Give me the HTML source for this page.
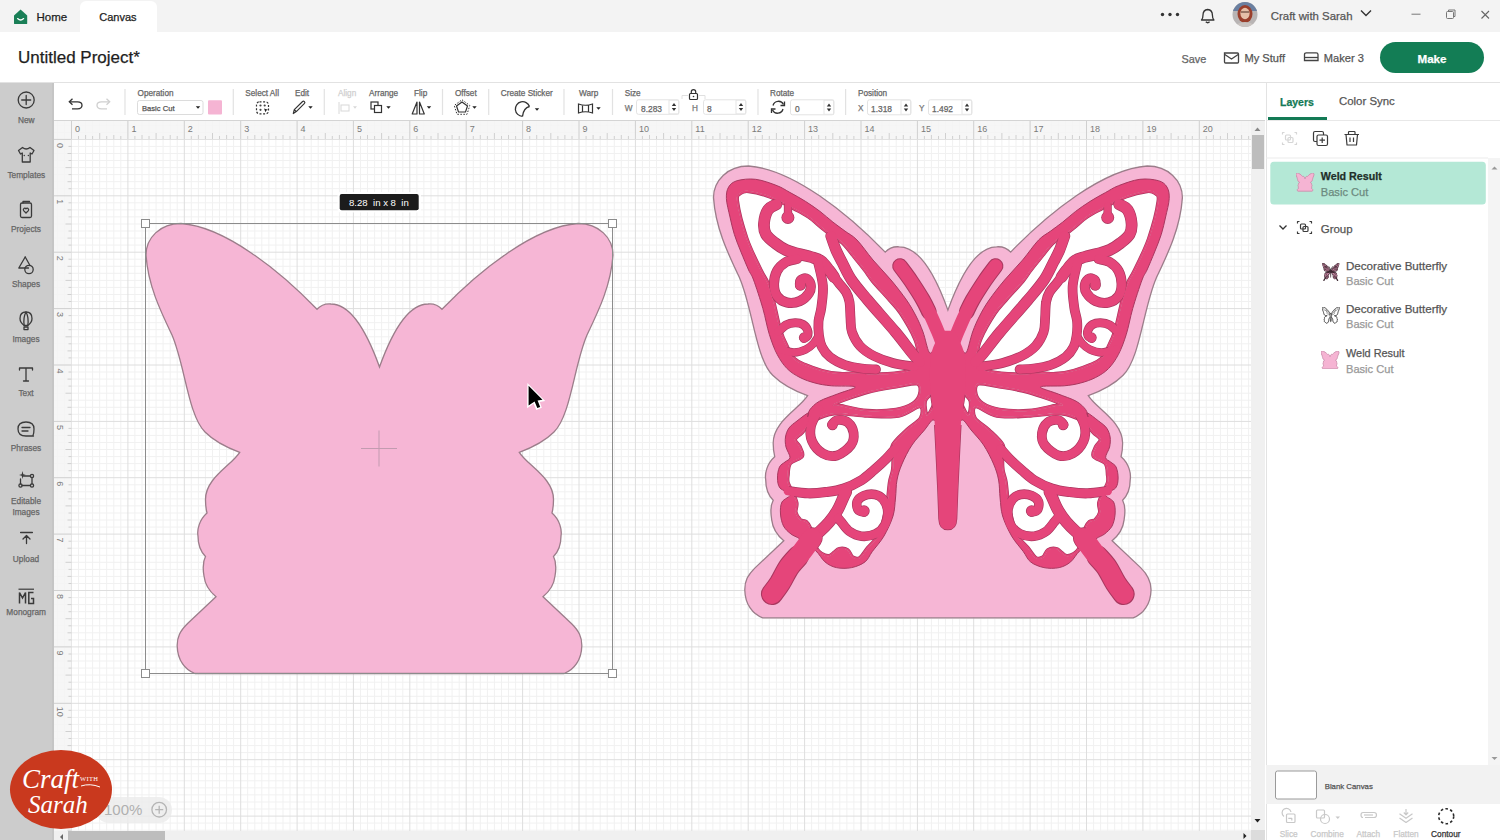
<!DOCTYPE html>
<html><head><meta charset="utf-8">
<style>
*{box-sizing:border-box;margin:0;padding:0}
html,body{width:1500px;height:840px;overflow:hidden;background:#fff;font-family:"Liberation Sans",sans-serif;color:#333}
.abs{position:absolute}
.t{position:absolute;white-space:nowrap;line-height:1;-webkit-text-stroke:0.25px currentColor}
</style></head><body>
<svg class="abs" style="left:0;top:0" width="1500" height="840"><rect x="53.5" y="121" width="1197.5" height="710" fill="#fff"/><path d="M57.4 120V831M64.5 120V831M78.5 120V831M85.6 120V831M92.6 120V831M99.7 120V831M106.7 120V831M113.8 120V831M120.8 120V831M134.9 120V831M142 120V831M149 120V831M156.1 120V831M163.1 120V831M170.2 120V831M177.2 120V831M191.3 120V831M198.4 120V831M205.4 120V831M212.5 120V831M219.5 120V831M226.6 120V831M233.6 120V831M247.7 120V831M254.8 120V831M261.8 120V831M268.9 120V831M275.9 120V831M283 120V831M290 120V831M304.1 120V831M311.2 120V831M318.2 120V831M325.3 120V831M332.3 120V831M339.4 120V831M346.4 120V831M360.5 120V831M367.5 120V831M374.6 120V831M381.6 120V831M388.7 120V831M395.7 120V831M402.8 120V831M416.9 120V831M423.9 120V831M431 120V831M438 120V831M445.1 120V831M452.1 120V831M459.2 120V831M473.3 120V831M480.3 120V831M487.4 120V831M494.4 120V831M501.5 120V831M508.5 120V831M515.6 120V831M529.7 120V831M536.7 120V831M543.8 120V831M550.8 120V831M557.9 120V831M564.9 120V831M572 120V831M586.1 120V831M593.1 120V831M600.2 120V831M607.2 120V831M614.3 120V831M621.3 120V831M628.4 120V831M642.4 120V831M649.5 120V831M656.5 120V831M663.6 120V831M670.6 120V831M677.7 120V831M684.7 120V831M698.8 120V831M705.9 120V831M712.9 120V831M720 120V831M727 120V831M734.1 120V831M741.1 120V831M755.2 120V831M762.3 120V831M769.3 120V831M776.4 120V831M783.4 120V831M790.5 120V831M797.5 120V831M811.6 120V831M818.7 120V831M825.7 120V831M832.8 120V831M839.8 120V831M846.9 120V831M853.9 120V831M868 120V831M875.1 120V831M882.1 120V831M889.2 120V831M896.2 120V831M903.3 120V831M910.3 120V831M924.4 120V831M931.4 120V831M938.5 120V831M945.5 120V831M952.6 120V831M959.6 120V831M966.7 120V831M980.8 120V831M987.8 120V831M994.9 120V831M1001.9 120V831M1009 120V831M1016 120V831M1023.1 120V831M1037.2 120V831M1044.2 120V831M1051.3 120V831M1058.3 120V831M1065.4 120V831M1072.4 120V831M1079.5 120V831M1093.6 120V831M1100.6 120V831M1107.7 120V831M1114.7 120V831M1121.8 120V831M1128.8 120V831M1135.9 120V831M1150 120V831M1157 120V831M1164.1 120V831M1171.1 120V831M1178.2 120V831M1185.2 120V831M1192.3 120V831M1206.3 120V831M1213.4 120V831M1220.4 120V831M1227.5 120V831M1234.5 120V831M1241.6 120V831M1248.6 120V831M53 125.3H1251M53 132.4H1251M53 146.4H1251M53 153.5H1251M53 160.5H1251M53 167.6H1251M53 174.6H1251M53 181.7H1251M53 188.7H1251M53 202.8H1251M53 209.9H1251M53 216.9H1251M53 224H1251M53 231H1251M53 238.1H1251M53 245.1H1251M53 259.2H1251M53 266.3H1251M53 273.3H1251M53 280.4H1251M53 287.4H1251M53 294.5H1251M53 301.5H1251M53 315.6H1251M53 322.7H1251M53 329.7H1251M53 336.8H1251M53 343.8H1251M53 350.9H1251M53 357.9H1251M53 372H1251M53 379.1H1251M53 386.1H1251M53 393.2H1251M53 400.2H1251M53 407.3H1251M53 414.3H1251M53 428.4H1251M53 435.4H1251M53 442.5H1251M53 449.5H1251M53 456.6H1251M53 463.6H1251M53 470.7H1251M53 484.8H1251M53 491.8H1251M53 498.9H1251M53 505.9H1251M53 513H1251M53 520H1251M53 527.1H1251M53 541.2H1251M53 548.2H1251M53 555.3H1251M53 562.3H1251M53 569.4H1251M53 576.4H1251M53 583.5H1251M53 597.6H1251M53 604.6H1251M53 611.7H1251M53 618.7H1251M53 625.8H1251M53 632.8H1251M53 639.9H1251M53 654H1251M53 661H1251M53 668.1H1251M53 675.1H1251M53 682.2H1251M53 689.2H1251M53 696.3H1251M53 710.3H1251M53 717.4H1251M53 724.4H1251M53 731.5H1251M53 738.5H1251M53 745.6H1251M53 752.6H1251M53 766.7H1251M53 773.8H1251M53 780.8H1251M53 787.9H1251M53 794.9H1251M53 802H1251M53 809H1251M53 823.1H1251M53 830.2H1251" stroke="#f1f1f1" stroke-width="1" fill="none"/>
<path d="M71.5 120V831M127.9 120V831M184.3 120V831M240.7 120V831M297.1 120V831M353.4 120V831M409.8 120V831M466.2 120V831M522.6 120V831M579 120V831M635.4 120V831M691.8 120V831M748.2 120V831M804.6 120V831M861 120V831M917.4 120V831M973.7 120V831M1030.1 120V831M1086.5 120V831M1142.9 120V831M1199.3 120V831M53 139.4H1251M53 195.8H1251M53 252.2H1251M53 308.6H1251M53 365H1251M53 421.4H1251M53 477.7H1251M53 534.1H1251M53 590.5H1251M53 646.9H1251M53 703.3H1251M53 759.7H1251M53 816.1H1251" stroke="#dedede" stroke-width="1" fill="none"/><rect x="53" y="120.5" width="1198" height="18.5" fill="#f5f5f5" fill-opacity="0.85"/>
<rect x="53" y="139" width="18.5" height="692" fill="#f5f5f5" fill-opacity="0.85"/>
<path d="M71.5 121V139M78.5 136V139M85.6 135V139M92.6 136V139M99.7 133V139M106.7 136V139M113.8 135V139M120.8 136V139M127.9 121V139M134.9 136V139M142 135V139M149 136V139M156.1 133V139M163.1 136V139M170.2 135V139M177.2 136V139M184.3 121V139M191.3 136V139M198.4 135V139M205.4 136V139M212.5 133V139M219.5 136V139M226.6 135V139M233.6 136V139M240.7 121V139M247.7 136V139M254.8 135V139M261.8 136V139M268.9 133V139M275.9 136V139M283 135V139M290 136V139M297.1 121V139M304.1 136V139M311.2 135V139M318.2 136V139M325.3 133V139M332.3 136V139M339.4 135V139M346.4 136V139M353.4 121V139M360.5 136V139M367.5 135V139M374.6 136V139M381.6 133V139M388.7 136V139M395.7 135V139M402.8 136V139M409.8 121V139M416.9 136V139M423.9 135V139M431 136V139M438 133V139M445.1 136V139M452.1 135V139M459.2 136V139M466.2 121V139M473.3 136V139M480.3 135V139M487.4 136V139M494.4 133V139M501.5 136V139M508.5 135V139M515.6 136V139M522.6 121V139M529.7 136V139M536.7 135V139M543.8 136V139M550.8 133V139M557.9 136V139M564.9 135V139M572 136V139M579 121V139M586.1 136V139M593.1 135V139M600.2 136V139M607.2 133V139M614.3 136V139M621.3 135V139M628.4 136V139M635.4 121V139M642.4 136V139M649.5 135V139M656.5 136V139M663.6 133V139M670.6 136V139M677.7 135V139M684.7 136V139M691.8 121V139M698.8 136V139M705.9 135V139M712.9 136V139M720 133V139M727 136V139M734.1 135V139M741.1 136V139M748.2 121V139M755.2 136V139M762.3 135V139M769.3 136V139M776.4 133V139M783.4 136V139M790.5 135V139M797.5 136V139M804.6 121V139M811.6 136V139M818.7 135V139M825.7 136V139M832.8 133V139M839.8 136V139M846.9 135V139M853.9 136V139M861 121V139M868 136V139M875.1 135V139M882.1 136V139M889.2 133V139M896.2 136V139M903.3 135V139M910.3 136V139M917.4 121V139M924.4 136V139M931.4 135V139M938.5 136V139M945.5 133V139M952.6 136V139M959.6 135V139M966.7 136V139M973.7 121V139M980.8 136V139M987.8 135V139M994.9 136V139M1001.9 133V139M1009 136V139M1016 135V139M1023.1 136V139M1030.1 121V139M1037.2 136V139M1044.2 135V139M1051.3 136V139M1058.3 133V139M1065.4 136V139M1072.4 135V139M1079.5 136V139M1086.5 121V139M1093.6 136V139M1100.6 135V139M1107.7 136V139M1114.7 133V139M1121.8 136V139M1128.8 135V139M1135.9 136V139M1142.9 121V139M1150 136V139M1157 135V139M1164.1 136V139M1171.1 133V139M1178.2 136V139M1185.2 135V139M1192.3 136V139M1199.3 121V139M1206.3 136V139M1213.4 135V139M1220.4 136V139M1227.5 133V139M1234.5 136V139M1241.6 135V139M1248.6 136V139M53 139.4H71.5M68.5 146.4H71.5M67.5 153.5H71.5M68.5 160.5H71.5M65.5 167.6H71.5M68.5 174.6H71.5M67.5 181.7H71.5M68.5 188.7H71.5M53 195.8H71.5M68.5 202.8H71.5M67.5 209.9H71.5M68.5 216.9H71.5M65.5 224H71.5M68.5 231H71.5M67.5 238.1H71.5M68.5 245.1H71.5M53 252.2H71.5M68.5 259.2H71.5M67.5 266.3H71.5M68.5 273.3H71.5M65.5 280.4H71.5M68.5 287.4H71.5M67.5 294.5H71.5M68.5 301.5H71.5M53 308.6H71.5M68.5 315.6H71.5M67.5 322.7H71.5M68.5 329.7H71.5M65.5 336.8H71.5M68.5 343.8H71.5M67.5 350.9H71.5M68.5 357.9H71.5M53 365H71.5M68.5 372H71.5M67.5 379.1H71.5M68.5 386.1H71.5M65.5 393.2H71.5M68.5 400.2H71.5M67.5 407.3H71.5M68.5 414.3H71.5M53 421.4H71.5M68.5 428.4H71.5M67.5 435.4H71.5M68.5 442.5H71.5M65.5 449.5H71.5M68.5 456.6H71.5M67.5 463.6H71.5M68.5 470.7H71.5M53 477.7H71.5M68.5 484.8H71.5M67.5 491.8H71.5M68.5 498.9H71.5M65.5 505.9H71.5M68.5 513H71.5M67.5 520H71.5M68.5 527.1H71.5M53 534.1H71.5M68.5 541.2H71.5M67.5 548.2H71.5M68.5 555.3H71.5M65.5 562.3H71.5M68.5 569.4H71.5M67.5 576.4H71.5M68.5 583.5H71.5M53 590.5H71.5M68.5 597.6H71.5M67.5 604.6H71.5M68.5 611.7H71.5M65.5 618.7H71.5M68.5 625.8H71.5M67.5 632.8H71.5M68.5 639.9H71.5M53 646.9H71.5M68.5 654H71.5M67.5 661H71.5M68.5 668.1H71.5M65.5 675.1H71.5M68.5 682.2H71.5M67.5 689.2H71.5M68.5 696.3H71.5M53 703.3H71.5M68.5 710.3H71.5M67.5 717.4H71.5M68.5 724.4H71.5M65.5 731.5H71.5M68.5 738.5H71.5M67.5 745.6H71.5M68.5 752.6H71.5M53 759.7H71.5M68.5 766.7H71.5M67.5 773.8H71.5M68.5 780.8H71.5M65.5 787.9H71.5M68.5 794.9H71.5M67.5 802H71.5M68.5 809H71.5M53 816.1H71.5M68.5 823.1H71.5M67.5 830.2H71.5" stroke="#d0d0d0" stroke-width="1" fill="none"/>
<path d="M53 120.5H1251" stroke="#d6d6d6" stroke-width="1"/>
<g font-family="Liberation Sans, sans-serif" font-size="9" fill="#7a7a7a"><text x="75" y="131.5">0</text><text x="131.4" y="131.5">1</text><text x="187.8" y="131.5">2</text><text x="244.2" y="131.5">3</text><text x="300.6" y="131.5">4</text><text x="356.9" y="131.5">5</text><text x="413.3" y="131.5">6</text><text x="469.7" y="131.5">7</text><text x="526.1" y="131.5">8</text><text x="582.5" y="131.5">9</text><text x="638.9" y="131.5">10</text><text x="695.3" y="131.5">11</text><text x="751.7" y="131.5">12</text><text x="808.1" y="131.5">13</text><text x="864.5" y="131.5">14</text><text x="920.9" y="131.5">15</text><text x="977.2" y="131.5">16</text><text x="1033.6" y="131.5">17</text><text x="1090" y="131.5">18</text><text x="1146.4" y="131.5">19</text><text x="1202.8" y="131.5">20</text></g>
<g font-family="Liberation Sans, sans-serif" font-size="9" fill="#7a7a7a"><text transform="translate(57 142.9) rotate(90)">0</text><text transform="translate(57 199.3) rotate(90)">1</text><text transform="translate(57 255.7) rotate(90)">2</text><text transform="translate(57 312.1) rotate(90)">3</text><text transform="translate(57 368.5) rotate(90)">4</text><text transform="translate(57 424.9) rotate(90)">5</text><text transform="translate(57 481.2) rotate(90)">6</text><text transform="translate(57 537.6) rotate(90)">7</text><text transform="translate(57 594) rotate(90)">8</text><text transform="translate(57 650.4) rotate(90)">9</text><text transform="translate(57 706.8) rotate(90)">10</text><text transform="translate(57 763.2) rotate(90)">11</text></g><path d="M 379.5 367 C 368 335 352 304 331 304 C 325 303.5 320 306 317 309.3 C 280 271 225 226.5 181 223.5 C 160 223.5 146 238 146 255 C 148 285 160 310 172 335 C 185 365 188 415 205 432 C 215 442 228 448 239.7 452.3 C 232 465 205 478 205.5 500 C 205.5 505 206 509 207 513 C 199 520 197 530 198 536 C 198 545 200 551 205.5 556.5 C 202 563 203 570 204 576 C 205 585 209 591 216 596.7 L 187.6 623.5 C 180 631 177 637 177.2 646 C 177.5 660 185 670 195 673.5 L 379.5 673.5 L 564 673.5 C 574 670 581.5 660 581.8 646 C 582 637 579 631 571.4 623.5 L 543 596.7 C 550 591 554 585 555 576 C 556 570 557 563 553.5 556.5 C 559 551 561 545 561 536 C 562 530 560 520 552 513 C 553 509 553.5 505 553.5 500 C 554 478 527 465 519.3 452.3 C 531 448 544 442 554 432 C 571 415 574 365 587 335 C 599 310 611 285 613 255 C 613 238 599 223.5 578 223.5 C 534 226.5 479 271 442 309.3 C 439 306 434 303.5 428 304 C 407 304 391 335 379.5 367 Z" fill="#f6b6d5" stroke="#9b7d8a" stroke-width="1.3"/><path d="M379 430.5V466.5M361 448.5H397" stroke="#c29bb0" stroke-width="1"/><rect x="145.5" y="223.5" width="467" height="450" fill="none" stroke="#8c8c8c" stroke-width="1"/><rect x="141.5" y="219.5" width="8" height="8" fill="#fff" stroke="#8c8c8c" stroke-width="1"/><rect x="608.5" y="219.5" width="8" height="8" fill="#fff" stroke="#8c8c8c" stroke-width="1"/><rect x="141.5" y="669.5" width="8" height="8" fill="#fff" stroke="#8c8c8c" stroke-width="1"/><rect x="608.5" y="669.5" width="8" height="8" fill="#fff" stroke="#8c8c8c" stroke-width="1"/><rect x="337.5" y="192" width="83.5" height="20.5" rx="3" fill="#fff" fill-opacity="0.9"/><rect x="339.7" y="194" width="79" height="16.3" rx="2" fill="#1c1c1c"/><text x="349" y="206.3" font-family="Liberation Sans, sans-serif" font-size="9.6" fill="#fff" xml:space="preserve">8.28  in x 8  in</text><path d="M 947.9 310.1 C 936.4 277.9 920.3 246.8 899.2 246.8 C 893.2 246.3 888.2 248.8 885.2 252.1 C 848 213.7 792.8 169 748.6 166 C 727.6 166 713.5 180.6 713.5 197.6 C 715.5 227.7 727.6 252.8 739.6 277.9 C 752.7 308.1 755.7 358.3 772.7 375.3 C 782.8 385.4 795.8 391.4 807.6 395.7 C 799.8 408.5 772.7 421.5 773.2 443.6 C 773.2 448.6 773.7 452.6 774.7 456.7 C 766.7 463.7 764.7 473.7 765.7 479.8 C 765.7 488.8 767.7 494.8 773.2 500.3 C 769.7 506.9 770.7 513.9 771.7 519.9 C 772.7 528.9 776.8 535 783.8 540.7 L 755.3 567.6 C 747.6 575.1 744.6 581.2 744.8 590.2 C 745.1 604.2 752.7 614.3 762.7 617.8 L 947.9 617.8 L 1133.2 617.8 C 1143.2 614.3 1150.7 604.2 1151 590.2 C 1151.2 581.2 1148.2 575.1 1140.6 567.6 L 1112.1 540.7 C 1119.1 535 1123.1 528.9 1124.1 519.9 C 1125.1 513.9 1126.1 506.9 1122.6 500.3 C 1128.2 494.8 1130.2 488.8 1130.2 479.8 C 1131.2 473.7 1129.2 463.7 1121.1 456.7 C 1122.1 452.6 1122.6 448.6 1122.6 443.6 C 1123.1 421.5 1096 408.5 1088.3 395.7 C 1100 391.4 1113.1 385.4 1123.1 375.3 C 1140.2 358.3 1143.2 308.1 1156.3 277.9 C 1168.3 252.8 1180.4 227.7 1182.4 197.6 C 1182.4 180.6 1168.3 166 1147.2 166 C 1103.1 169 1047.8 213.7 1010.7 252.1 C 1007.7 248.8 1002.7 246.3 996.6 246.8 C 975.5 246.8 959.5 277.9 947.9 310.1 Z" fill="#f6b6d5" stroke="#9b7d8a" stroke-width="1.3"/><path d="M 941 345 C 938.7 336.7 936 348.8 934 350 C 932 351.2 930.8 355 929 352 C 927.2 349 925.2 338 923 332 C 920.8 326 918.8 321.3 916 316 C 913.2 310.7 910.7 306 906.5 300 C 902.3 294 896.6 286.7 891 280 C 885.4 273.3 878.7 266.7 873 260 C 867.3 253.3 861.7 244.8 857 240 C 852.3 235.2 849 234.1 845 231.1 C 841 228.1 837.1 225.4 832.9 222.1 C 828.7 218.8 824.5 214.8 820 211.4 C 815.5 208 810.7 204.7 805.7 201.5 C 800.7 198.3 794.8 195.1 790 192.5 C 785.2 189.9 782.8 187.9 777.1 185.7 C 771.4 183.5 762.4 180.1 755.7 179.3 C 749 178.5 741.6 179.4 737.1 180.7 C 732.6 182 730.4 184.1 728.6 187.1 C 726.8 190.1 726.2 193.6 726.4 198.6 C 726.6 203.6 728.7 211.1 730 217 C 731.3 222.9 732.5 228.5 734.3 234.3 C 736.1 240.1 738.6 246.1 741 252 C 743.4 257.9 746.5 265.3 748.6 270 C 750.7 274.7 751.2 273.6 753.6 280 C 756 286.4 760.3 299.6 762.9 308.6 C 765.5 317.7 766.9 326.7 769.3 334.3 C 771.7 341.9 774.1 348.6 777.1 354.3 C 780.1 360 783.3 364.7 787.1 368.6 C 790.9 372.5 795.4 375.1 800 377.5 C 804.6 379.9 809.8 381.6 815 383 C 820.2 384.4 824.7 385.2 831.4 385.8 C 838.1 386.4 854.2 385.5 855.2 386.9 C 856.2 388.3 843.4 391.6 837.4 394 C 831.4 396.4 824.1 398.6 819.5 401.2 C 814.9 403.8 812 406.9 810 409.5 C 808 412.1 807.9 416.1 807.6 416.7 C 807.3 417.3 809.8 412.3 808 413 C 806.2 413.7 800.2 418.5 797 421 C 793.8 423.5 790.9 425.3 789 428 C 787.1 430.7 786 433.8 785.5 437 C 785 440.2 785.2 443.6 786 447 C 786.8 450.4 790.2 455 790 457.5 C 789.8 460 786.8 460.4 785 462 C 783.2 463.6 780.8 464.3 779.5 467 C 778.2 469.7 777.4 474.5 777.5 478 C 777.6 481.5 777.8 485.2 780 488 C 782.2 490.8 790.2 492.2 790.5 494.5 C 790.8 496.8 783.7 498.8 782 502 C 780.3 505.2 780.2 510 780.5 514 C 780.8 518 781.8 522.7 783.5 526 C 785.2 529.3 788.2 531.8 791 534 C 793.8 536.2 795.9 536.2 800 539 C 804.1 541.8 811.3 546.7 815.5 550.5 C 819.7 554.3 821.5 559 825 561.9 C 828.5 564.8 831.9 566.6 836.4 567.6 C 840.9 568.6 846.9 568.6 851.7 567.6 C 856.5 566.6 861.5 564.6 865 561.9 C 868.5 559.2 869.2 555.7 872.4 551.4 C 875.6 547.1 880.6 541.9 884 536 C 887.4 530.1 891.1 522.3 893 516 C 894.9 509.7 894.8 504 895.5 498 C 896.2 492 895.9 485.7 897 480 C 898.1 474.3 899.5 469.8 902 464 C 904.5 458.2 908.2 450.7 912 445 C 915.8 439.3 921.2 434.1 924.5 430 C 927.8 425.9 929.8 422.3 931.9 420.5 C 934 418.7 934.3 422.4 937 419 C 939.7 415.6 947.2 412.3 947.9 400 C 948.6 387.7 943.3 353.3 941 345 Z" fill="#e5457a" stroke="#a9375f" stroke-width="1"/><path d="M 954.6 345 C 956.9 336.7 959.6 348.8 961.6 350 C 963.6 351.2 964.8 355 966.6 352 C 968.4 349 970.4 338 972.6 332 C 974.8 326 976.8 321.3 979.6 316 C 982.3 310.7 984.9 306 989.1 300 C 993.3 294 999 286.7 1004.6 280 C 1010.2 273.3 1016.9 266.7 1022.6 260 C 1028.3 253.3 1033.9 244.8 1038.6 240 C 1043.3 235.2 1046.6 234.1 1050.6 231.1 C 1054.6 228.1 1058.5 225.4 1062.7 222.1 C 1066.9 218.8 1071.1 214.8 1075.6 211.4 C 1080.1 208 1084.9 204.7 1089.9 201.5 C 1094.9 198.3 1100.8 195.1 1105.6 192.5 C 1110.4 189.9 1112.8 187.9 1118.5 185.7 C 1124.2 183.5 1133.2 180.1 1139.9 179.3 C 1146.6 178.5 1154 179.4 1158.5 180.7 C 1163 182 1165.2 184.1 1167 187.1 C 1168.8 190.1 1169.4 193.6 1169.2 198.6 C 1169 203.6 1166.9 211.1 1165.6 217 C 1164.3 222.9 1163.1 228.5 1161.3 234.3 C 1159.5 240.1 1157 246.1 1154.6 252 C 1152.2 257.9 1149.1 265.3 1147 270 C 1144.9 274.7 1144.4 273.6 1142 280 C 1139.6 286.4 1135.3 299.6 1132.7 308.6 C 1130.1 317.7 1128.7 326.7 1126.3 334.3 C 1123.9 341.9 1121.5 348.6 1118.5 354.3 C 1115.5 360 1112.3 364.7 1108.5 368.6 C 1104.7 372.5 1100.2 375.1 1095.6 377.5 C 1090.9 379.9 1085.8 381.6 1080.6 383 C 1075.4 384.4 1070.9 385.2 1064.2 385.8 C 1057.5 386.4 1041.4 385.5 1040.4 386.9 C 1039.4 388.3 1052.2 391.6 1058.2 394 C 1064.1 396.4 1071.5 398.6 1076.1 401.2 C 1080.7 403.8 1083.6 406.9 1085.6 409.5 C 1087.6 412.1 1087.7 416.1 1088 416.7 C 1088.3 417.3 1085.8 412.3 1087.6 413 C 1089.4 413.7 1095.4 418.5 1098.6 421 C 1101.8 423.5 1104.7 425.3 1106.6 428 C 1108.5 430.7 1109.6 433.8 1110.1 437 C 1110.6 440.2 1110.3 443.6 1109.6 447 C 1108.8 450.4 1105.4 455 1105.6 457.5 C 1105.8 460 1108.8 460.4 1110.6 462 C 1112.3 463.6 1114.8 464.3 1116.1 467 C 1117.3 469.7 1118.2 474.5 1118.1 478 C 1118 481.5 1117.8 485.2 1115.6 488 C 1113.4 490.8 1105.4 492.2 1105.1 494.5 C 1104.8 496.8 1111.9 498.8 1113.6 502 C 1115.3 505.2 1115.3 510 1115.1 514 C 1114.8 518 1113.8 522.7 1112.1 526 C 1110.3 529.3 1107.3 531.8 1104.6 534 C 1101.8 536.2 1099.7 536.2 1095.6 539 C 1091.5 541.8 1084.3 546.7 1080.1 550.5 C 1075.9 554.3 1074.1 559 1070.6 561.9 C 1067.1 564.8 1063.6 566.6 1059.2 567.6 C 1054.7 568.6 1048.7 568.6 1043.9 567.6 C 1039.1 566.6 1034 564.6 1030.6 561.9 C 1027.1 559.2 1026.4 555.7 1023.2 551.4 C 1020 547.1 1015 541.9 1011.6 536 C 1008.2 530.1 1004.5 522.3 1002.6 516 C 1000.7 509.7 1000.8 504 1000.1 498 C 999.4 492 999.7 485.7 998.6 480 C 997.5 474.3 996.1 469.8 993.6 464 C 991.1 458.2 987.3 450.7 983.6 445 C 979.8 439.3 974.4 434.1 971.1 430 C 967.8 425.9 965.8 422.3 963.7 420.5 C 961.6 418.7 961.3 422.4 958.6 419 C 955.9 415.6 948.4 412.3 947.7 400 C 947 387.7 952.3 353.3 954.6 345 Z" fill="#e5457a" stroke="#a9375f" stroke-width="1"/><path d="M 737 201.4 C 736 193.8 738.6 194.7 740.5 193 C 742.4 191.3 743.7 190.4 748.6 191 C 753.5 191.6 762.4 193.6 770 196.5 C 777.6 199.4 787.9 205.2 794.3 208.5 C 800.7 211.8 804 213.3 808.6 216.5 C 813.2 219.7 818.3 224.5 822 227.5 C 825.7 230.5 827.5 231.9 831 234.5 C 834.5 237.1 838.7 238.8 843 243 C 847.3 247.2 853.3 255.5 857 260 C 860.7 264.5 862.3 266.5 865 270 C 867.7 273.5 868.8 276 873 281 C 877.2 286 885.3 294.6 890 300 C 894.7 305.4 896.8 306.9 901 313.3 C 905.2 319.7 912 331.4 915 338.3 C 918 345.2 918.5 350.4 919 355 C 919.5 359.6 920.3 363.2 918 366 C 915.7 368.8 911.3 370.6 905 372 C 898.7 373.4 888.3 374.2 880 374.5 C 871.7 374.8 861.7 373.6 855 373.5 C 848.3 373.4 845.5 374.4 840 374 C 834.5 373.6 827.8 372.5 822 371 C 816.2 369.5 809.6 367 805 365 C 800.4 363 797.3 362 794.3 359 C 791.3 356 789.5 351.9 787.1 347.1 C 784.7 342.3 782.4 337.9 780 330 C 777.6 322.1 775 307.9 772.9 300 C 770.8 292.1 769.6 287.9 767.5 282.9 C 765.4 277.9 764 277.4 760.5 270 C 757 262.6 750.4 250 746.5 238.6 C 742.6 227.2 738 209 737 201.4 Z" fill="#fff"/><path d="M 1158.6 201.4 C 1159.6 193.8 1157 194.7 1155.1 193 C 1153.2 191.3 1151.9 190.4 1147 191 C 1142.1 191.6 1133.2 193.6 1125.6 196.5 C 1118 199.4 1107.7 205.2 1101.3 208.5 C 1094.9 211.8 1091.6 213.3 1087 216.5 C 1082.4 219.7 1077.3 224.5 1073.6 227.5 C 1069.9 230.5 1068.1 231.9 1064.6 234.5 C 1061.1 237.1 1056.9 238.8 1052.6 243 C 1048.3 247.2 1042.3 255.5 1038.6 260 C 1034.9 264.5 1033.3 266.5 1030.6 270 C 1027.9 273.5 1026.8 276 1022.6 281 C 1018.4 286 1010.3 294.6 1005.6 300 C 1000.9 305.4 998.8 306.9 994.6 313.3 C 990.4 319.7 983.6 331.4 980.6 338.3 C 977.6 345.2 977.1 350.4 976.6 355 C 976.1 359.6 975.3 363.2 977.6 366 C 979.9 368.8 984.3 370.6 990.6 372 C 996.9 373.4 1007.3 374.2 1015.6 374.5 C 1023.9 374.8 1033.9 373.6 1040.6 373.5 C 1047.3 373.4 1050.1 374.4 1055.6 374 C 1061.1 373.6 1067.8 372.5 1073.6 371 C 1079.4 369.5 1086 367 1090.6 365 C 1095.2 363 1098.3 362 1101.3 359 C 1104.3 356 1106.1 351.9 1108.5 347.1 C 1110.9 342.3 1113.2 337.9 1115.6 330 C 1118 322.1 1120.6 307.9 1122.7 300 C 1124.8 292.1 1126 287.9 1128.1 282.9 C 1130.2 277.9 1131.6 277.4 1135.1 270 C 1138.6 262.6 1145.2 250 1149.1 238.6 C 1153 227.2 1157.6 209 1158.6 201.4 Z" fill="#fff"/><path d="M 813.8 420.5 C 819.2 417.3 825.3 414.1 834.3 413.3 C 843.3 412.5 856.9 415.3 867.6 415.7 C 878.3 416.1 889.9 417.3 898.6 415.7 C 907.3 414.1 916.3 405.8 920 406.2 C 923.7 406.6 923.2 414 921 418 C 918.8 422 911.7 425.5 907 430 C 902.3 434.5 895.2 440.3 893 445 C 890.8 449.7 893.5 453.8 893.5 458 C 893.5 462.2 893.6 466 893 470 C 892.4 474 890.8 477 890 482 C 889.2 487 888.8 494.5 888 500 C 887.2 505.5 886.5 509.2 885 515 C 883.5 520.8 881.8 529.5 879 535 C 876.2 540.5 871.2 544.2 868 548 C 864.8 551.8 862.6 556.4 860 558 C 857.4 559.6 854.5 558.7 852.4 557.4 C 850.3 556.1 849.8 551.6 847.6 550.2 C 845.4 548.8 841.5 548.6 839.3 549 C 837.1 549.4 836.3 551.4 834.5 552.6 C 832.7 553.8 830.8 556 828.6 556.2 C 826.4 556.4 823.4 555 821.4 553.8 C 819.4 552.6 818.1 551.3 816.7 549 C 815.3 546.7 814.1 543.6 813 540 C 811.9 536.4 811 530.6 809.8 527.6 C 808.6 524.6 807.6 523.2 806 521.9 C 804.4 520.6 802 521.6 800.2 520 C 798.5 518.4 796.1 515.2 795.5 512.4 C 794.9 509.5 797 506.3 796.4 502.9 C 795.8 499.5 793.5 495.4 792 492 C 790.5 488.6 788.3 485.2 787.6 482.4 C 786.9 479.6 787.2 478.4 787.6 475.2 C 788 472 787.6 466.5 790 463.3 C 792.4 460.1 800.3 459 801.9 456.2 C 803.5 453.4 800.7 449.5 799.5 446.7 C 798.3 443.9 794.4 441.9 794.8 439.5 C 795.2 437.1 798.7 435.6 801.9 432.4 C 805.1 429.2 808.4 423.7 813.8 420.5 Z" fill="#fff"/><path d="M 1081.8 420.5 C 1076.4 417.3 1070.3 414.1 1061.3 413.3 C 1052.3 412.5 1038.7 415.3 1028 415.7 C 1017.3 416.1 1005.7 417.3 997 415.7 C 988.3 414.1 979.3 405.8 975.6 406.2 C 971.9 406.6 972.4 414 974.6 418 C 976.8 422 983.9 425.5 988.6 430 C 993.3 434.5 1000.3 440.3 1002.6 445 C 1004.8 449.7 1002.1 453.8 1002.1 458 C 1002.1 462.2 1002 466 1002.6 470 C 1003.2 474 1004.8 477 1005.6 482 C 1006.4 487 1006.8 494.5 1007.6 500 C 1008.4 505.5 1009.1 509.2 1010.6 515 C 1012.1 520.8 1013.8 529.5 1016.6 535 C 1019.4 540.5 1024.4 544.2 1027.6 548 C 1030.8 551.8 1033 556.4 1035.6 558 C 1038.2 559.6 1041.1 558.7 1043.2 557.4 C 1045.3 556.1 1045.8 551.6 1048 550.2 C 1050.2 548.8 1054.1 548.6 1056.3 549 C 1058.5 549.4 1059.3 551.4 1061.1 552.6 C 1062.9 553.8 1064.8 556 1067 556.2 C 1069.2 556.4 1072.2 555 1074.2 553.8 C 1076.2 552.6 1077.5 551.3 1078.9 549 C 1080.3 546.7 1081.4 543.6 1082.6 540 C 1083.8 536.4 1084.6 530.6 1085.8 527.6 C 1087 524.6 1088 523.2 1089.6 521.9 C 1091.2 520.6 1093.6 521.6 1095.4 520 C 1097.1 518.4 1099.5 515.2 1100.1 512.4 C 1100.7 509.5 1098.6 506.3 1099.2 502.9 C 1099.8 499.5 1102.1 495.4 1103.6 492 C 1105.1 488.6 1107.3 485.2 1108 482.4 C 1108.7 479.6 1108.4 478.4 1108 475.2 C 1107.6 472 1108 466.5 1105.6 463.3 C 1103.2 460.1 1095.3 459 1093.7 456.2 C 1092.1 453.4 1094.9 449.5 1096.1 446.7 C 1097.3 443.9 1101.2 441.9 1100.8 439.5 C 1100.4 437.1 1096.9 435.6 1093.7 432.4 C 1090.5 429.2 1087.2 423.7 1081.8 420.5 Z" fill="#fff"/><path d="M 834.3 403.8 C 838.7 401.4 856.9 394.9 867.6 391.9 C 878.3 388.9 890.3 387.4 898.6 386 C 906.9 384.6 914 382.2 917.6 383.6 C 921.2 385 920.8 390.9 920 394.3 C 919.2 397.7 916.9 401.2 912.9 403.8 C 908.9 406.4 903.8 408.6 896.2 409.8 C 888.7 411 876.7 411.6 867.6 411 C 858.5 410.4 847 407.4 841.4 406.2 C 835.8 405 829.9 406.2 834.3 403.8 Z" fill="#fff"/><path d="M 1061.3 403.8 C 1056.9 401.4 1038.7 394.9 1028 391.9 C 1017.3 388.9 1005.3 387.4 997 386 C 988.7 384.6 981.6 382.2 978 383.6 C 974.4 385 974.8 390.9 975.6 394.3 C 976.4 397.7 978.7 401.2 982.7 403.8 C 986.7 406.4 991.8 408.6 999.4 409.8 C 1006.9 411 1018.9 411.6 1028 411 C 1037.1 410.4 1048.6 407.4 1054.2 406.2 C 1059.7 405 1065.7 406.2 1061.3 403.8 Z" fill="#fff"/><path d="M 924.8 401.4 C 925.6 397.8 930.3 393.9 931.9 394.3 C 933.5 394.7 935.1 400.2 934.3 403.8 C 933.5 407.4 928.7 416.1 927.1 415.7 C 925.5 415.3 924 405 924.8 401.4 Z" fill="#fff"/><path d="M 970.8 401.4 C 970 397.8 965.3 393.9 963.7 394.3 C 962.1 394.7 960.5 400.2 961.3 403.8 C 962.1 407.4 966.9 416.1 968.5 415.7 C 970.1 415.3 971.6 405 970.8 401.4 Z" fill="#fff"/><defs><clipPath id="holeclip"><path d="M 737 201.4 C 736 193.8 738.6 194.7 740.5 193 C 742.4 191.3 743.7 190.4 748.6 191 C 753.5 191.6 762.4 193.6 770 196.5 C 777.6 199.4 787.9 205.2 794.3 208.5 C 800.7 211.8 804 213.3 808.6 216.5 C 813.2 219.7 818.3 224.5 822 227.5 C 825.7 230.5 827.5 231.9 831 234.5 C 834.5 237.1 838.7 238.8 843 243 C 847.3 247.2 853.3 255.5 857 260 C 860.7 264.5 862.3 266.5 865 270 C 867.7 273.5 868.8 276 873 281 C 877.2 286 885.3 294.6 890 300 C 894.7 305.4 896.8 306.9 901 313.3 C 905.2 319.7 912 331.4 915 338.3 C 918 345.2 918.5 350.4 919 355 C 919.5 359.6 920.3 363.2 918 366 C 915.7 368.8 911.3 370.6 905 372 C 898.7 373.4 888.3 374.2 880 374.5 C 871.7 374.8 861.7 373.6 855 373.5 C 848.3 373.4 845.5 374.4 840 374 C 834.5 373.6 827.8 372.5 822 371 C 816.2 369.5 809.6 367 805 365 C 800.4 363 797.3 362 794.3 359 C 791.3 356 789.5 351.9 787.1 347.1 C 784.7 342.3 782.4 337.9 780 330 C 777.6 322.1 775 307.9 772.9 300 C 770.8 292.1 769.6 287.9 767.5 282.9 C 765.4 277.9 764 277.4 760.5 270 C 757 262.6 750.4 250 746.5 238.6 C 742.6 227.2 738 209 737 201.4 Z"/><path d="M 1158.6 201.4 C 1159.6 193.8 1157 194.7 1155.1 193 C 1153.2 191.3 1151.9 190.4 1147 191 C 1142.1 191.6 1133.2 193.6 1125.6 196.5 C 1118 199.4 1107.7 205.2 1101.3 208.5 C 1094.9 211.8 1091.6 213.3 1087 216.5 C 1082.4 219.7 1077.3 224.5 1073.6 227.5 C 1069.9 230.5 1068.1 231.9 1064.6 234.5 C 1061.1 237.1 1056.9 238.8 1052.6 243 C 1048.3 247.2 1042.3 255.5 1038.6 260 C 1034.9 264.5 1033.3 266.5 1030.6 270 C 1027.9 273.5 1026.8 276 1022.6 281 C 1018.4 286 1010.3 294.6 1005.6 300 C 1000.9 305.4 998.8 306.9 994.6 313.3 C 990.4 319.7 983.6 331.4 980.6 338.3 C 977.6 345.2 977.1 350.4 976.6 355 C 976.1 359.6 975.3 363.2 977.6 366 C 979.9 368.8 984.3 370.6 990.6 372 C 996.9 373.4 1007.3 374.2 1015.6 374.5 C 1023.9 374.8 1033.9 373.6 1040.6 373.5 C 1047.3 373.4 1050.1 374.4 1055.6 374 C 1061.1 373.6 1067.8 372.5 1073.6 371 C 1079.4 369.5 1086 367 1090.6 365 C 1095.2 363 1098.3 362 1101.3 359 C 1104.3 356 1106.1 351.9 1108.5 347.1 C 1110.9 342.3 1113.2 337.9 1115.6 330 C 1118 322.1 1120.6 307.9 1122.7 300 C 1124.8 292.1 1126 287.9 1128.1 282.9 C 1130.2 277.9 1131.6 277.4 1135.1 270 C 1138.6 262.6 1145.2 250 1149.1 238.6 C 1153 227.2 1157.6 209 1158.6 201.4 Z"/><path d="M 813.8 420.5 C 819.2 417.3 825.3 414.1 834.3 413.3 C 843.3 412.5 856.9 415.3 867.6 415.7 C 878.3 416.1 889.9 417.3 898.6 415.7 C 907.3 414.1 916.3 405.8 920 406.2 C 923.7 406.6 923.2 414 921 418 C 918.8 422 911.7 425.5 907 430 C 902.3 434.5 895.2 440.3 893 445 C 890.8 449.7 893.5 453.8 893.5 458 C 893.5 462.2 893.6 466 893 470 C 892.4 474 890.8 477 890 482 C 889.2 487 888.8 494.5 888 500 C 887.2 505.5 886.5 509.2 885 515 C 883.5 520.8 881.8 529.5 879 535 C 876.2 540.5 871.2 544.2 868 548 C 864.8 551.8 862.6 556.4 860 558 C 857.4 559.6 854.5 558.7 852.4 557.4 C 850.3 556.1 849.8 551.6 847.6 550.2 C 845.4 548.8 841.5 548.6 839.3 549 C 837.1 549.4 836.3 551.4 834.5 552.6 C 832.7 553.8 830.8 556 828.6 556.2 C 826.4 556.4 823.4 555 821.4 553.8 C 819.4 552.6 818.1 551.3 816.7 549 C 815.3 546.7 814.1 543.6 813 540 C 811.9 536.4 811 530.6 809.8 527.6 C 808.6 524.6 807.6 523.2 806 521.9 C 804.4 520.6 802 521.6 800.2 520 C 798.5 518.4 796.1 515.2 795.5 512.4 C 794.9 509.5 797 506.3 796.4 502.9 C 795.8 499.5 793.5 495.4 792 492 C 790.5 488.6 788.3 485.2 787.6 482.4 C 786.9 479.6 787.2 478.4 787.6 475.2 C 788 472 787.6 466.5 790 463.3 C 792.4 460.1 800.3 459 801.9 456.2 C 803.5 453.4 800.7 449.5 799.5 446.7 C 798.3 443.9 794.4 441.9 794.8 439.5 C 795.2 437.1 798.7 435.6 801.9 432.4 C 805.1 429.2 808.4 423.7 813.8 420.5 Z"/><path d="M 1081.8 420.5 C 1076.4 417.3 1070.3 414.1 1061.3 413.3 C 1052.3 412.5 1038.7 415.3 1028 415.7 C 1017.3 416.1 1005.7 417.3 997 415.7 C 988.3 414.1 979.3 405.8 975.6 406.2 C 971.9 406.6 972.4 414 974.6 418 C 976.8 422 983.9 425.5 988.6 430 C 993.3 434.5 1000.3 440.3 1002.6 445 C 1004.8 449.7 1002.1 453.8 1002.1 458 C 1002.1 462.2 1002 466 1002.6 470 C 1003.2 474 1004.8 477 1005.6 482 C 1006.4 487 1006.8 494.5 1007.6 500 C 1008.4 505.5 1009.1 509.2 1010.6 515 C 1012.1 520.8 1013.8 529.5 1016.6 535 C 1019.4 540.5 1024.4 544.2 1027.6 548 C 1030.8 551.8 1033 556.4 1035.6 558 C 1038.2 559.6 1041.1 558.7 1043.2 557.4 C 1045.3 556.1 1045.8 551.6 1048 550.2 C 1050.2 548.8 1054.1 548.6 1056.3 549 C 1058.5 549.4 1059.3 551.4 1061.1 552.6 C 1062.9 553.8 1064.8 556 1067 556.2 C 1069.2 556.4 1072.2 555 1074.2 553.8 C 1076.2 552.6 1077.5 551.3 1078.9 549 C 1080.3 546.7 1081.4 543.6 1082.6 540 C 1083.8 536.4 1084.6 530.6 1085.8 527.6 C 1087 524.6 1088 523.2 1089.6 521.9 C 1091.2 520.6 1093.6 521.6 1095.4 520 C 1097.1 518.4 1099.5 515.2 1100.1 512.4 C 1100.7 509.5 1098.6 506.3 1099.2 502.9 C 1099.8 499.5 1102.1 495.4 1103.6 492 C 1105.1 488.6 1107.3 485.2 1108 482.4 C 1108.7 479.6 1108.4 478.4 1108 475.2 C 1107.6 472 1108 466.5 1105.6 463.3 C 1103.2 460.1 1095.3 459 1093.7 456.2 C 1092.1 453.4 1094.9 449.5 1096.1 446.7 C 1097.3 443.9 1101.2 441.9 1100.8 439.5 C 1100.4 437.1 1096.9 435.6 1093.7 432.4 C 1090.5 429.2 1087.2 423.7 1081.8 420.5 Z"/><path d="M 834.3 403.8 C 838.7 401.4 856.9 394.9 867.6 391.9 C 878.3 388.9 890.3 387.4 898.6 386 C 906.9 384.6 914 382.2 917.6 383.6 C 921.2 385 920.8 390.9 920 394.3 C 919.2 397.7 916.9 401.2 912.9 403.8 C 908.9 406.4 903.8 408.6 896.2 409.8 C 888.7 411 876.7 411.6 867.6 411 C 858.5 410.4 847 407.4 841.4 406.2 C 835.8 405 829.9 406.2 834.3 403.8 Z"/><path d="M 1061.3 403.8 C 1056.9 401.4 1038.7 394.9 1028 391.9 C 1017.3 388.9 1005.3 387.4 997 386 C 988.7 384.6 981.6 382.2 978 383.6 C 974.4 385 974.8 390.9 975.6 394.3 C 976.4 397.7 978.7 401.2 982.7 403.8 C 986.7 406.4 991.8 408.6 999.4 409.8 C 1006.9 411 1018.9 411.6 1028 411 C 1037.1 410.4 1048.6 407.4 1054.2 406.2 C 1059.7 405 1065.7 406.2 1061.3 403.8 Z"/><path d="M 924.8 401.4 C 925.6 397.8 930.3 393.9 931.9 394.3 C 933.5 394.7 935.1 400.2 934.3 403.8 C 933.5 407.4 928.7 416.1 927.1 415.7 C 925.5 415.3 924 405 924.8 401.4 Z"/><path d="M 970.8 401.4 C 970 397.8 965.3 393.9 963.7 394.3 C 962.1 394.7 960.5 400.2 961.3 403.8 C 962.1 407.4 966.9 416.1 968.5 415.7 C 970.1 415.3 971.6 405 970.8 401.4 Z"/></clipPath></defs><g clip-path="url(#holeclip)"><path d="M 737 201.4 C 736 193.8 738.6 194.7 740.5 193 C 742.4 191.3 743.7 190.4 748.6 191 C 753.5 191.6 762.4 193.6 770 196.5 C 777.6 199.4 787.9 205.2 794.3 208.5 C 800.7 211.8 804 213.3 808.6 216.5 C 813.2 219.7 818.3 224.5 822 227.5 C 825.7 230.5 827.5 231.9 831 234.5 C 834.5 237.1 838.7 238.8 843 243 C 847.3 247.2 853.3 255.5 857 260 C 860.7 264.5 862.3 266.5 865 270 C 867.7 273.5 868.8 276 873 281 C 877.2 286 885.3 294.6 890 300 C 894.7 305.4 896.8 306.9 901 313.3 C 905.2 319.7 912 331.4 915 338.3 C 918 345.2 918.5 350.4 919 355 C 919.5 359.6 920.3 363.2 918 366 C 915.7 368.8 911.3 370.6 905 372 C 898.7 373.4 888.3 374.2 880 374.5 C 871.7 374.8 861.7 373.6 855 373.5 C 848.3 373.4 845.5 374.4 840 374 C 834.5 373.6 827.8 372.5 822 371 C 816.2 369.5 809.6 367 805 365 C 800.4 363 797.3 362 794.3 359 C 791.3 356 789.5 351.9 787.1 347.1 C 784.7 342.3 782.4 337.9 780 330 C 777.6 322.1 775 307.9 772.9 300 C 770.8 292.1 769.6 287.9 767.5 282.9 C 765.4 277.9 764 277.4 760.5 270 C 757 262.6 750.4 250 746.5 238.6 C 742.6 227.2 738 209 737 201.4 Z" fill="none" stroke="#a9375f" stroke-width="4.3"/><path d="M 1158.6 201.4 C 1159.6 193.8 1157 194.7 1155.1 193 C 1153.2 191.3 1151.9 190.4 1147 191 C 1142.1 191.6 1133.2 193.6 1125.6 196.5 C 1118 199.4 1107.7 205.2 1101.3 208.5 C 1094.9 211.8 1091.6 213.3 1087 216.5 C 1082.4 219.7 1077.3 224.5 1073.6 227.5 C 1069.9 230.5 1068.1 231.9 1064.6 234.5 C 1061.1 237.1 1056.9 238.8 1052.6 243 C 1048.3 247.2 1042.3 255.5 1038.6 260 C 1034.9 264.5 1033.3 266.5 1030.6 270 C 1027.9 273.5 1026.8 276 1022.6 281 C 1018.4 286 1010.3 294.6 1005.6 300 C 1000.9 305.4 998.8 306.9 994.6 313.3 C 990.4 319.7 983.6 331.4 980.6 338.3 C 977.6 345.2 977.1 350.4 976.6 355 C 976.1 359.6 975.3 363.2 977.6 366 C 979.9 368.8 984.3 370.6 990.6 372 C 996.9 373.4 1007.3 374.2 1015.6 374.5 C 1023.9 374.8 1033.9 373.6 1040.6 373.5 C 1047.3 373.4 1050.1 374.4 1055.6 374 C 1061.1 373.6 1067.8 372.5 1073.6 371 C 1079.4 369.5 1086 367 1090.6 365 C 1095.2 363 1098.3 362 1101.3 359 C 1104.3 356 1106.1 351.9 1108.5 347.1 C 1110.9 342.3 1113.2 337.9 1115.6 330 C 1118 322.1 1120.6 307.9 1122.7 300 C 1124.8 292.1 1126 287.9 1128.1 282.9 C 1130.2 277.9 1131.6 277.4 1135.1 270 C 1138.6 262.6 1145.2 250 1149.1 238.6 C 1153 227.2 1157.6 209 1158.6 201.4 Z" fill="none" stroke="#a9375f" stroke-width="4.3"/><path d="M 813.8 420.5 C 819.2 417.3 825.3 414.1 834.3 413.3 C 843.3 412.5 856.9 415.3 867.6 415.7 C 878.3 416.1 889.9 417.3 898.6 415.7 C 907.3 414.1 916.3 405.8 920 406.2 C 923.7 406.6 923.2 414 921 418 C 918.8 422 911.7 425.5 907 430 C 902.3 434.5 895.2 440.3 893 445 C 890.8 449.7 893.5 453.8 893.5 458 C 893.5 462.2 893.6 466 893 470 C 892.4 474 890.8 477 890 482 C 889.2 487 888.8 494.5 888 500 C 887.2 505.5 886.5 509.2 885 515 C 883.5 520.8 881.8 529.5 879 535 C 876.2 540.5 871.2 544.2 868 548 C 864.8 551.8 862.6 556.4 860 558 C 857.4 559.6 854.5 558.7 852.4 557.4 C 850.3 556.1 849.8 551.6 847.6 550.2 C 845.4 548.8 841.5 548.6 839.3 549 C 837.1 549.4 836.3 551.4 834.5 552.6 C 832.7 553.8 830.8 556 828.6 556.2 C 826.4 556.4 823.4 555 821.4 553.8 C 819.4 552.6 818.1 551.3 816.7 549 C 815.3 546.7 814.1 543.6 813 540 C 811.9 536.4 811 530.6 809.8 527.6 C 808.6 524.6 807.6 523.2 806 521.9 C 804.4 520.6 802 521.6 800.2 520 C 798.5 518.4 796.1 515.2 795.5 512.4 C 794.9 509.5 797 506.3 796.4 502.9 C 795.8 499.5 793.5 495.4 792 492 C 790.5 488.6 788.3 485.2 787.6 482.4 C 786.9 479.6 787.2 478.4 787.6 475.2 C 788 472 787.6 466.5 790 463.3 C 792.4 460.1 800.3 459 801.9 456.2 C 803.5 453.4 800.7 449.5 799.5 446.7 C 798.3 443.9 794.4 441.9 794.8 439.5 C 795.2 437.1 798.7 435.6 801.9 432.4 C 805.1 429.2 808.4 423.7 813.8 420.5 Z" fill="none" stroke="#a9375f" stroke-width="4.3"/><path d="M 1081.8 420.5 C 1076.4 417.3 1070.3 414.1 1061.3 413.3 C 1052.3 412.5 1038.7 415.3 1028 415.7 C 1017.3 416.1 1005.7 417.3 997 415.7 C 988.3 414.1 979.3 405.8 975.6 406.2 C 971.9 406.6 972.4 414 974.6 418 C 976.8 422 983.9 425.5 988.6 430 C 993.3 434.5 1000.3 440.3 1002.6 445 C 1004.8 449.7 1002.1 453.8 1002.1 458 C 1002.1 462.2 1002 466 1002.6 470 C 1003.2 474 1004.8 477 1005.6 482 C 1006.4 487 1006.8 494.5 1007.6 500 C 1008.4 505.5 1009.1 509.2 1010.6 515 C 1012.1 520.8 1013.8 529.5 1016.6 535 C 1019.4 540.5 1024.4 544.2 1027.6 548 C 1030.8 551.8 1033 556.4 1035.6 558 C 1038.2 559.6 1041.1 558.7 1043.2 557.4 C 1045.3 556.1 1045.8 551.6 1048 550.2 C 1050.2 548.8 1054.1 548.6 1056.3 549 C 1058.5 549.4 1059.3 551.4 1061.1 552.6 C 1062.9 553.8 1064.8 556 1067 556.2 C 1069.2 556.4 1072.2 555 1074.2 553.8 C 1076.2 552.6 1077.5 551.3 1078.9 549 C 1080.3 546.7 1081.4 543.6 1082.6 540 C 1083.8 536.4 1084.6 530.6 1085.8 527.6 C 1087 524.6 1088 523.2 1089.6 521.9 C 1091.2 520.6 1093.6 521.6 1095.4 520 C 1097.1 518.4 1099.5 515.2 1100.1 512.4 C 1100.7 509.5 1098.6 506.3 1099.2 502.9 C 1099.8 499.5 1102.1 495.4 1103.6 492 C 1105.1 488.6 1107.3 485.2 1108 482.4 C 1108.7 479.6 1108.4 478.4 1108 475.2 C 1107.6 472 1108 466.5 1105.6 463.3 C 1103.2 460.1 1095.3 459 1093.7 456.2 C 1092.1 453.4 1094.9 449.5 1096.1 446.7 C 1097.3 443.9 1101.2 441.9 1100.8 439.5 C 1100.4 437.1 1096.9 435.6 1093.7 432.4 C 1090.5 429.2 1087.2 423.7 1081.8 420.5 Z" fill="none" stroke="#a9375f" stroke-width="4.3"/><path d="M 834.3 403.8 C 838.7 401.4 856.9 394.9 867.6 391.9 C 878.3 388.9 890.3 387.4 898.6 386 C 906.9 384.6 914 382.2 917.6 383.6 C 921.2 385 920.8 390.9 920 394.3 C 919.2 397.7 916.9 401.2 912.9 403.8 C 908.9 406.4 903.8 408.6 896.2 409.8 C 888.7 411 876.7 411.6 867.6 411 C 858.5 410.4 847 407.4 841.4 406.2 C 835.8 405 829.9 406.2 834.3 403.8 Z" fill="none" stroke="#a9375f" stroke-width="4.3"/><path d="M 1061.3 403.8 C 1056.9 401.4 1038.7 394.9 1028 391.9 C 1017.3 388.9 1005.3 387.4 997 386 C 988.7 384.6 981.6 382.2 978 383.6 C 974.4 385 974.8 390.9 975.6 394.3 C 976.4 397.7 978.7 401.2 982.7 403.8 C 986.7 406.4 991.8 408.6 999.4 409.8 C 1006.9 411 1018.9 411.6 1028 411 C 1037.1 410.4 1048.6 407.4 1054.2 406.2 C 1059.7 405 1065.7 406.2 1061.3 403.8 Z" fill="none" stroke="#a9375f" stroke-width="4.3"/><path d="M 924.8 401.4 C 925.6 397.8 930.3 393.9 931.9 394.3 C 933.5 394.7 935.1 400.2 934.3 403.8 C 933.5 407.4 928.7 416.1 927.1 415.7 C 925.5 415.3 924 405 924.8 401.4 Z" fill="none" stroke="#a9375f" stroke-width="4.3"/><path d="M 970.8 401.4 C 970 397.8 965.3 393.9 963.7 394.3 C 962.1 394.7 960.5 400.2 961.3 403.8 C 962.1 407.4 966.9 416.1 968.5 415.7 C 970.1 415.3 971.6 405 970.8 401.4 Z" fill="none" stroke="#a9375f" stroke-width="4.3"/><path d="M 737 201.4 C 736 193.8 738.6 194.7 740.5 193 C 742.4 191.3 743.7 190.4 748.6 191 C 753.5 191.6 762.4 193.6 770 196.5 C 777.6 199.4 787.9 205.2 794.3 208.5 C 800.7 211.8 804 213.3 808.6 216.5 C 813.2 219.7 818.3 224.5 822 227.5 C 825.7 230.5 827.5 231.9 831 234.5 C 834.5 237.1 838.7 238.8 843 243 C 847.3 247.2 853.3 255.5 857 260 C 860.7 264.5 862.3 266.5 865 270 C 867.7 273.5 868.8 276 873 281 C 877.2 286 885.3 294.6 890 300 C 894.7 305.4 896.8 306.9 901 313.3 C 905.2 319.7 912 331.4 915 338.3 C 918 345.2 918.5 350.4 919 355 C 919.5 359.6 920.3 363.2 918 366 C 915.7 368.8 911.3 370.6 905 372 C 898.7 373.4 888.3 374.2 880 374.5 C 871.7 374.8 861.7 373.6 855 373.5 C 848.3 373.4 845.5 374.4 840 374 C 834.5 373.6 827.8 372.5 822 371 C 816.2 369.5 809.6 367 805 365 C 800.4 363 797.3 362 794.3 359 C 791.3 356 789.5 351.9 787.1 347.1 C 784.7 342.3 782.4 337.9 780 330 C 777.6 322.1 775 307.9 772.9 300 C 770.8 292.1 769.6 287.9 767.5 282.9 C 765.4 277.9 764 277.4 760.5 270 C 757 262.6 750.4 250 746.5 238.6 C 742.6 227.2 738 209 737 201.4 Z" fill="none" stroke="#e5457a" stroke-width="3"/><path d="M 1158.6 201.4 C 1159.6 193.8 1157 194.7 1155.1 193 C 1153.2 191.3 1151.9 190.4 1147 191 C 1142.1 191.6 1133.2 193.6 1125.6 196.5 C 1118 199.4 1107.7 205.2 1101.3 208.5 C 1094.9 211.8 1091.6 213.3 1087 216.5 C 1082.4 219.7 1077.3 224.5 1073.6 227.5 C 1069.9 230.5 1068.1 231.9 1064.6 234.5 C 1061.1 237.1 1056.9 238.8 1052.6 243 C 1048.3 247.2 1042.3 255.5 1038.6 260 C 1034.9 264.5 1033.3 266.5 1030.6 270 C 1027.9 273.5 1026.8 276 1022.6 281 C 1018.4 286 1010.3 294.6 1005.6 300 C 1000.9 305.4 998.8 306.9 994.6 313.3 C 990.4 319.7 983.6 331.4 980.6 338.3 C 977.6 345.2 977.1 350.4 976.6 355 C 976.1 359.6 975.3 363.2 977.6 366 C 979.9 368.8 984.3 370.6 990.6 372 C 996.9 373.4 1007.3 374.2 1015.6 374.5 C 1023.9 374.8 1033.9 373.6 1040.6 373.5 C 1047.3 373.4 1050.1 374.4 1055.6 374 C 1061.1 373.6 1067.8 372.5 1073.6 371 C 1079.4 369.5 1086 367 1090.6 365 C 1095.2 363 1098.3 362 1101.3 359 C 1104.3 356 1106.1 351.9 1108.5 347.1 C 1110.9 342.3 1113.2 337.9 1115.6 330 C 1118 322.1 1120.6 307.9 1122.7 300 C 1124.8 292.1 1126 287.9 1128.1 282.9 C 1130.2 277.9 1131.6 277.4 1135.1 270 C 1138.6 262.6 1145.2 250 1149.1 238.6 C 1153 227.2 1157.6 209 1158.6 201.4 Z" fill="none" stroke="#e5457a" stroke-width="3"/><path d="M 813.8 420.5 C 819.2 417.3 825.3 414.1 834.3 413.3 C 843.3 412.5 856.9 415.3 867.6 415.7 C 878.3 416.1 889.9 417.3 898.6 415.7 C 907.3 414.1 916.3 405.8 920 406.2 C 923.7 406.6 923.2 414 921 418 C 918.8 422 911.7 425.5 907 430 C 902.3 434.5 895.2 440.3 893 445 C 890.8 449.7 893.5 453.8 893.5 458 C 893.5 462.2 893.6 466 893 470 C 892.4 474 890.8 477 890 482 C 889.2 487 888.8 494.5 888 500 C 887.2 505.5 886.5 509.2 885 515 C 883.5 520.8 881.8 529.5 879 535 C 876.2 540.5 871.2 544.2 868 548 C 864.8 551.8 862.6 556.4 860 558 C 857.4 559.6 854.5 558.7 852.4 557.4 C 850.3 556.1 849.8 551.6 847.6 550.2 C 845.4 548.8 841.5 548.6 839.3 549 C 837.1 549.4 836.3 551.4 834.5 552.6 C 832.7 553.8 830.8 556 828.6 556.2 C 826.4 556.4 823.4 555 821.4 553.8 C 819.4 552.6 818.1 551.3 816.7 549 C 815.3 546.7 814.1 543.6 813 540 C 811.9 536.4 811 530.6 809.8 527.6 C 808.6 524.6 807.6 523.2 806 521.9 C 804.4 520.6 802 521.6 800.2 520 C 798.5 518.4 796.1 515.2 795.5 512.4 C 794.9 509.5 797 506.3 796.4 502.9 C 795.8 499.5 793.5 495.4 792 492 C 790.5 488.6 788.3 485.2 787.6 482.4 C 786.9 479.6 787.2 478.4 787.6 475.2 C 788 472 787.6 466.5 790 463.3 C 792.4 460.1 800.3 459 801.9 456.2 C 803.5 453.4 800.7 449.5 799.5 446.7 C 798.3 443.9 794.4 441.9 794.8 439.5 C 795.2 437.1 798.7 435.6 801.9 432.4 C 805.1 429.2 808.4 423.7 813.8 420.5 Z" fill="none" stroke="#e5457a" stroke-width="3"/><path d="M 1081.8 420.5 C 1076.4 417.3 1070.3 414.1 1061.3 413.3 C 1052.3 412.5 1038.7 415.3 1028 415.7 C 1017.3 416.1 1005.7 417.3 997 415.7 C 988.3 414.1 979.3 405.8 975.6 406.2 C 971.9 406.6 972.4 414 974.6 418 C 976.8 422 983.9 425.5 988.6 430 C 993.3 434.5 1000.3 440.3 1002.6 445 C 1004.8 449.7 1002.1 453.8 1002.1 458 C 1002.1 462.2 1002 466 1002.6 470 C 1003.2 474 1004.8 477 1005.6 482 C 1006.4 487 1006.8 494.5 1007.6 500 C 1008.4 505.5 1009.1 509.2 1010.6 515 C 1012.1 520.8 1013.8 529.5 1016.6 535 C 1019.4 540.5 1024.4 544.2 1027.6 548 C 1030.8 551.8 1033 556.4 1035.6 558 C 1038.2 559.6 1041.1 558.7 1043.2 557.4 C 1045.3 556.1 1045.8 551.6 1048 550.2 C 1050.2 548.8 1054.1 548.6 1056.3 549 C 1058.5 549.4 1059.3 551.4 1061.1 552.6 C 1062.9 553.8 1064.8 556 1067 556.2 C 1069.2 556.4 1072.2 555 1074.2 553.8 C 1076.2 552.6 1077.5 551.3 1078.9 549 C 1080.3 546.7 1081.4 543.6 1082.6 540 C 1083.8 536.4 1084.6 530.6 1085.8 527.6 C 1087 524.6 1088 523.2 1089.6 521.9 C 1091.2 520.6 1093.6 521.6 1095.4 520 C 1097.1 518.4 1099.5 515.2 1100.1 512.4 C 1100.7 509.5 1098.6 506.3 1099.2 502.9 C 1099.8 499.5 1102.1 495.4 1103.6 492 C 1105.1 488.6 1107.3 485.2 1108 482.4 C 1108.7 479.6 1108.4 478.4 1108 475.2 C 1107.6 472 1108 466.5 1105.6 463.3 C 1103.2 460.1 1095.3 459 1093.7 456.2 C 1092.1 453.4 1094.9 449.5 1096.1 446.7 C 1097.3 443.9 1101.2 441.9 1100.8 439.5 C 1100.4 437.1 1096.9 435.6 1093.7 432.4 C 1090.5 429.2 1087.2 423.7 1081.8 420.5 Z" fill="none" stroke="#e5457a" stroke-width="3"/><path d="M 834.3 403.8 C 838.7 401.4 856.9 394.9 867.6 391.9 C 878.3 388.9 890.3 387.4 898.6 386 C 906.9 384.6 914 382.2 917.6 383.6 C 921.2 385 920.8 390.9 920 394.3 C 919.2 397.7 916.9 401.2 912.9 403.8 C 908.9 406.4 903.8 408.6 896.2 409.8 C 888.7 411 876.7 411.6 867.6 411 C 858.5 410.4 847 407.4 841.4 406.2 C 835.8 405 829.9 406.2 834.3 403.8 Z" fill="none" stroke="#e5457a" stroke-width="3"/><path d="M 1061.3 403.8 C 1056.9 401.4 1038.7 394.9 1028 391.9 C 1017.3 388.9 1005.3 387.4 997 386 C 988.7 384.6 981.6 382.2 978 383.6 C 974.4 385 974.8 390.9 975.6 394.3 C 976.4 397.7 978.7 401.2 982.7 403.8 C 986.7 406.4 991.8 408.6 999.4 409.8 C 1006.9 411 1018.9 411.6 1028 411 C 1037.1 410.4 1048.6 407.4 1054.2 406.2 C 1059.7 405 1065.7 406.2 1061.3 403.8 Z" fill="none" stroke="#e5457a" stroke-width="3"/><path d="M 924.8 401.4 C 925.6 397.8 930.3 393.9 931.9 394.3 C 933.5 394.7 935.1 400.2 934.3 403.8 C 933.5 407.4 928.7 416.1 927.1 415.7 C 925.5 415.3 924 405 924.8 401.4 Z" fill="none" stroke="#e5457a" stroke-width="3"/><path d="M 970.8 401.4 C 970 397.8 965.3 393.9 963.7 394.3 C 962.1 394.7 960.5 400.2 961.3 403.8 C 962.1 407.4 966.9 416.1 968.5 415.7 C 970.1 415.3 971.6 405 970.8 401.4 Z" fill="none" stroke="#e5457a" stroke-width="3"/><path d="M 776.4 204.3 C 775 205.2 770 206.8 767.9 210 C 765.8 213.2 764.3 219.5 764 223.6 C 763.7 227.7 764.2 231.1 766 234.3 C 767.8 237.5 771.7 240.4 775 243 C 778.3 245.6 782 248.2 786 250 C 790 251.8 794.8 252.8 799 254 C 803.2 255.2 807.3 255.8 811 257 C 814.7 258.2 818 258.8 821 261 C 824 263.2 826.8 267.3 829 270 C 831.2 272.7 833.2 275.8 834 277" fill="none" stroke="#a9375f" stroke-width="11.8" stroke-linecap="round" stroke-linejoin="round"/><path d="M 1119.2 204.3 C 1120.6 205.2 1125.6 206.8 1127.7 210 C 1129.8 213.2 1131.3 219.5 1131.6 223.6 C 1131.9 227.7 1131.4 231.1 1129.6 234.3 C 1127.8 237.5 1123.9 240.4 1120.6 243 C 1117.3 245.6 1113.6 248.2 1109.6 250 C 1105.6 251.8 1100.8 252.8 1096.6 254 C 1092.4 255.2 1088.3 255.8 1084.6 257 C 1080.9 258.2 1077.6 258.8 1074.6 261 C 1071.6 263.2 1068.8 267.3 1066.6 270 C 1064.4 272.7 1062.4 275.8 1061.6 277" fill="none" stroke="#a9375f" stroke-width="11.8" stroke-linecap="round" stroke-linejoin="round"/><path d="M 821 261 C 822.3 262.5 826.2 266.5 829 270 C 831.8 273.5 835.2 278.3 838 282 C 840.8 285.7 844.1 288.7 846 292 C 847.9 295.3 848.8 297.7 849.5 302 C 850.2 306.3 850.1 313 850.5 318 C 850.9 323 850.4 327.3 852 332 C 853.6 336.7 856.3 342 860 346 C 863.7 350 868.5 353.2 874 356 C 879.5 358.8 886.2 361.2 893 363 C 899.8 364.8 911.3 366.1 915 366.7" fill="none" stroke="#a9375f" stroke-width="9.8" stroke-linecap="round" stroke-linejoin="round"/><path d="M 1074.6 261 C 1073.3 262.5 1069.4 266.5 1066.6 270 C 1063.8 273.5 1060.4 278.3 1057.6 282 C 1054.8 285.7 1051.5 288.7 1049.6 292 C 1047.7 295.3 1046.8 297.7 1046.1 302 C 1045.3 306.3 1045.5 313 1045.1 318 C 1044.7 323 1045.2 327.3 1043.6 332 C 1042 336.7 1039.3 342 1035.6 346 C 1031.9 350 1027.1 353.2 1021.6 356 C 1016.1 358.8 1009.4 361.2 1002.6 363 C 995.8 364.8 984.3 366.1 980.6 366.7" fill="none" stroke="#a9375f" stroke-width="9.8" stroke-linecap="round" stroke-linejoin="round"/><path d="M 831 236 C 831.8 238.3 834.2 245.7 836 250 C 837.8 254.3 839.4 257 842 262 C 844.6 267 847.3 273.7 851.6 280 C 855.9 286.3 860.4 291.3 867.7 300 C 875 308.7 888.1 323.2 895.5 332 C 902.9 340.8 907.9 348 912 353 C 916.1 358 918.7 360.5 920 362" fill="none" stroke="#a9375f" stroke-width="11.3" stroke-linecap="round" stroke-linejoin="round"/><path d="M 1064.6 236 C 1063.8 238.3 1061.4 245.7 1059.6 250 C 1057.8 254.3 1056.2 257 1053.6 262 C 1051 267 1048.3 273.7 1044 280 C 1039.7 286.3 1035.2 291.3 1027.9 300 C 1020.6 308.7 1007.5 323.2 1000.1 332 C 992.7 340.8 987.7 348 983.6 353 C 979.5 358 976.9 360.5 975.6 362" fill="none" stroke="#a9375f" stroke-width="11.3" stroke-linecap="round" stroke-linejoin="round"/><path d="M 818 262 C 818.8 265.9 822.3 278.2 822.9 285.7 C 823.5 293.2 822.1 301.2 821.4 307.1 C 820.7 313.1 818.9 316.6 818.5 321.4 C 818.1 326.2 818.4 331.4 819 335.7 C 819.6 340 820.2 343.4 822 347 C 823.8 350.6 826.2 354 830 357 C 833.8 360 839.7 363.1 845 365 C 850.3 366.9 856.8 367.8 862 368.5 C 867.2 369.2 873.7 369.3 876 369.5" fill="none" stroke="#a9375f" stroke-width="9.8" stroke-linecap="round" stroke-linejoin="round"/><path d="M 1077.6 262 C 1076.8 265.9 1073.3 278.2 1072.7 285.7 C 1072.1 293.2 1073.5 301.2 1074.2 307.1 C 1074.9 313.1 1076.7 316.6 1077.1 321.4 C 1077.5 326.2 1077.2 331.4 1076.6 335.7 C 1076 340 1075.4 343.4 1073.6 347 C 1071.8 350.6 1069.4 354 1065.6 357 C 1061.8 360 1055.9 363.1 1050.6 365 C 1045.3 366.9 1038.8 367.8 1033.6 368.5 C 1028.4 369.2 1021.9 369.3 1019.6 369.5" fill="none" stroke="#a9375f" stroke-width="9.8" stroke-linecap="round" stroke-linejoin="round"/><path d="M 797 259 C 795.2 259.5 789.3 260 786 262 C 782.7 264 779 267.3 777 271 C 775 274.7 774 279.8 774 284 C 774 288.2 774.8 292.9 777 296 C 779.2 299.1 783.2 301.7 787 302.5 C 790.8 303.3 796.3 302.6 800 301 C 803.7 299.4 807.2 295.8 809 293 C 810.8 290.2 811 286.4 810.5 284 C 810 281.6 807.7 279.1 806 278.5 C 804.3 277.9 801.5 279.3 800.5 280.5 C 799.5 281.7 800.1 284.7 800 285.5" fill="none" stroke="#a9375f" stroke-width="10.1" stroke-linecap="round" stroke-linejoin="round"/><path d="M 1098.6 259 C 1100.4 259.5 1106.3 260 1109.6 262 C 1112.9 264 1116.6 267.3 1118.6 271 C 1120.6 274.7 1121.6 279.8 1121.6 284 C 1121.6 288.2 1120.8 292.9 1118.6 296 C 1116.4 299.1 1112.4 301.7 1108.6 302.5 C 1104.8 303.3 1099.3 302.6 1095.6 301 C 1091.9 299.4 1088.3 295.8 1086.6 293 C 1084.8 290.2 1084.6 286.4 1085.1 284 C 1085.6 281.6 1087.9 279.1 1089.6 278.5 C 1091.3 277.9 1094.1 279.3 1095.1 280.5 C 1096.1 281.7 1095.5 284.7 1095.6 285.5" fill="none" stroke="#a9375f" stroke-width="10.1" stroke-linecap="round" stroke-linejoin="round"/><path d="M 778 332 C 779.3 330.8 783.2 326.5 786 325 C 788.8 323.5 792.2 322.9 795 322.8 C 797.8 322.7 800.9 323.3 803 324.5 C 805.1 325.7 806.8 328.1 807.5 330 C 808.2 331.9 808.1 334.6 807.5 336 C 806.9 337.4 804.6 338.1 804 338.5" fill="none" stroke="#a9375f" stroke-width="9" stroke-linecap="round" stroke-linejoin="round"/><path d="M 1117.6 332 C 1116.3 330.8 1112.4 326.5 1109.6 325 C 1106.8 323.5 1103.4 322.9 1100.6 322.8 C 1097.8 322.7 1094.7 323.3 1092.6 324.5 C 1090.5 325.7 1088.8 328.1 1088.1 330 C 1087.3 331.9 1087.5 334.6 1088.1 336 C 1088.7 337.4 1091 338.1 1091.6 338.5" fill="none" stroke="#a9375f" stroke-width="9" stroke-linecap="round" stroke-linejoin="round"/><path d="M 779 349 C 781.5 349.6 789.3 352.4 793.8 352.5 C 798.2 352.6 802.4 351 805.7 349.5 C 809 348 811.5 345.6 813.5 343.5 C 815.5 341.4 817.2 338.1 818 337" fill="none" stroke="#a9375f" stroke-width="8.3" stroke-linecap="round" stroke-linejoin="round"/><path d="M 1116.6 349 C 1114.1 349.6 1106.2 352.4 1101.8 352.5 C 1097.3 352.6 1093.2 351 1089.9 349.5 C 1086.6 348 1084.1 345.6 1082.1 343.5 C 1080 341.4 1078.3 338.1 1077.6 337" fill="none" stroke="#a9375f" stroke-width="8.3" stroke-linecap="round" stroke-linejoin="round"/><path d="M 788 206 C 788 207.5 788 213.5 788 215" fill="none" stroke="#a9375f" stroke-width="8.3" stroke-linecap="round" stroke-linejoin="round"/><path d="M 1107.6 206 C 1107.6 207.5 1107.6 213.5 1107.6 215" fill="none" stroke="#a9375f" stroke-width="8.3" stroke-linecap="round" stroke-linejoin="round"/><path d="M 788 491 C 791.3 491.4 801.6 493.1 807.9 493.3 C 814.2 493.5 819.8 492.9 825.7 492.1 C 831.7 491.3 837.7 490.6 843.6 488.6 C 849.5 486.6 856.3 483.3 861.4 480.2 C 866.5 477.1 869.9 473.5 874 470 C 878.1 466.5 882.5 462.5 886 459 C 889.5 455.5 893.5 450.7 895 449" fill="none" stroke="#a9375f" stroke-width="10.1" stroke-linecap="round" stroke-linejoin="round"/><path d="M 1107.6 491 C 1104.3 491.4 1094 493.1 1087.7 493.3 C 1081.4 493.5 1075.8 492.9 1069.9 492.1 C 1063.9 491.3 1058 490.6 1052 488.6 C 1046 486.6 1039.3 483.3 1034.2 480.2 C 1029.1 477.1 1025.7 473.5 1021.6 470 C 1017.5 466.5 1013.1 462.5 1009.6 459 C 1006.1 455.5 1002.1 450.7 1000.6 449" fill="none" stroke="#a9375f" stroke-width="10.1" stroke-linecap="round" stroke-linejoin="round"/><path d="M 819 409 C 817.7 411.8 812.2 420.7 811 426 C 809.8 431.3 810 436.4 812 441 C 814 445.6 818.8 451.1 823 453.5 C 827.2 455.9 832.3 456.9 837 455.5 C 841.7 454.1 848.2 448.8 851 445 C 853.8 441.2 854.1 436.8 853.6 433 C 853.1 429.2 850.7 424.7 848 422.5 C 845.3 420.3 840.2 419.7 837.5 420 C 834.8 420.3 832.9 423.8 832 424.5" fill="none" stroke="#a9375f" stroke-width="9.8" stroke-linecap="round" stroke-linejoin="round"/><path d="M 1076.6 409 C 1077.9 411.8 1083.4 420.7 1084.6 426 C 1085.8 431.3 1085.6 436.4 1083.6 441 C 1081.6 445.6 1076.8 451.1 1072.6 453.5 C 1068.4 455.9 1063.3 456.9 1058.6 455.5 C 1053.9 454.1 1047.4 448.8 1044.6 445 C 1041.8 441.2 1041.5 436.8 1042 433 C 1042.5 429.2 1044.9 424.7 1047.6 422.5 C 1050.3 420.3 1055.4 419.7 1058.1 420 C 1060.8 420.3 1062.7 423.8 1063.6 424.5" fill="none" stroke="#a9375f" stroke-width="9.8" stroke-linecap="round" stroke-linejoin="round"/><path d="M 846 492 C 845.6 492.8 845 493.9 843.6 496.9 C 842.2 499.9 840 505.8 837.6 510 C 835.2 514.2 832.3 518.3 829.3 521.9 C 826.3 525.5 823 528.6 819.8 531.4 C 816.6 534.2 813.2 536.2 810.2 538.6 C 807.2 541 803.3 544.5 801.9 545.7" fill="none" stroke="#a9375f" stroke-width="12" stroke-linecap="round" stroke-linejoin="round"/><path d="M 1049.6 492 C 1050 492.8 1050.6 493.9 1052 496.9 C 1053.4 499.9 1055.6 505.8 1058 510 C 1060.4 514.2 1063.3 518.3 1066.3 521.9 C 1069.3 525.5 1072.6 528.6 1075.8 531.4 C 1079 534.2 1082.4 536.2 1085.4 538.6 C 1088.4 541 1092.3 544.5 1093.7 545.7" fill="none" stroke="#a9375f" stroke-width="12" stroke-linecap="round" stroke-linejoin="round"/><path d="M 838 518 C 838.5 518.6 839.3 519.7 841.2 521.9 C 843.1 524.1 846.1 529 849.5 531.4 C 852.9 533.8 857 535.8 861.4 536.2 C 865.8 536.6 871.7 535.8 875.7 533.8 C 879.7 531.8 883.2 528.3 885.2 524.3 C 887.2 520.3 888 514.2 887.6 510 C 887.2 505.8 885.2 501.9 883.1 499.3 C 881 496.7 878.2 495.1 875 494.5 C 871.8 493.9 866.8 494.5 863.8 495.7 C 860.8 496.9 858 499.3 857.1 501.7 C 856.2 504.1 857.1 508.3 858.3 510 C 859.4 511.7 863 511.7 864 512" fill="none" stroke="#a9375f" stroke-width="9.6" stroke-linecap="round" stroke-linejoin="round"/><path d="M 1057.6 518 C 1057.1 518.6 1056.3 519.7 1054.4 521.9 C 1052.5 524.1 1049.5 529 1046.1 531.4 C 1042.7 533.8 1038.6 535.8 1034.2 536.2 C 1029.8 536.6 1023.9 535.8 1019.9 533.8 C 1015.9 531.8 1012.4 528.3 1010.4 524.3 C 1008.4 520.3 1007.6 514.2 1008 510 C 1008.3 505.8 1010.4 501.9 1012.5 499.3 C 1014.6 496.7 1017.4 495.1 1020.6 494.5 C 1023.8 493.9 1028.8 494.5 1031.8 495.7 C 1034.8 496.9 1037.6 499.3 1038.5 501.7 C 1039.4 504.1 1038.5 508.3 1037.3 510 C 1036.1 511.7 1032.5 511.7 1031.6 512" fill="none" stroke="#a9375f" stroke-width="9.6" stroke-linecap="round" stroke-linejoin="round"/><path d="M 900 266 C 901.8 268.5 907.2 275.3 911 281 C 914.8 286.7 919.7 294.2 923 300 C 926.3 305.8 928.5 310.7 931 316 C 933.5 321.3 936.2 327.7 938 332 C 939.8 336.3 941.3 340.3 942 342" fill="none" stroke="#a9375f" stroke-width="14.8" stroke-linecap="round" stroke-linejoin="round"/><path d="M 995.6 266 C 993.8 268.5 988.4 275.3 984.6 281 C 980.8 286.7 975.9 294.2 972.6 300 C 969.3 305.8 967.1 310.7 964.6 316 C 962.1 321.3 959.4 327.7 957.6 332 C 955.8 336.3 954.3 340.3 953.6 342" fill="none" stroke="#a9375f" stroke-width="14.8" stroke-linecap="round" stroke-linejoin="round"/><path d="M 812 538 C 810.2 540.5 804.8 548.2 801 553 C 797.2 557.8 792.5 562 789 567 C 785.5 572 782.8 578.5 780 583 C 777.2 587.5 773.3 592.2 772 594" fill="none" stroke="#a9375f" stroke-width="21.3" stroke-linecap="round" stroke-linejoin="round"/><path d="M 1083.6 538 C 1085.4 540.5 1090.8 548.2 1094.6 553 C 1098.4 557.8 1103.1 562 1106.6 567 C 1110.1 572 1112.8 578.5 1115.6 583 C 1118.4 587.5 1122.3 592.2 1123.6 594" fill="none" stroke="#a9375f" stroke-width="21.3" stroke-linecap="round" stroke-linejoin="round"/><circle cx="787.9" cy="217.5" r="6.5" fill="#a9375f"/><circle cx="1107.7" cy="217.5" r="6.5" fill="#a9375f"/><circle cx="800.5" cy="285" r="5.5" fill="#a9375f"/><circle cx="1095.1" cy="285" r="5.5" fill="#a9375f"/><circle cx="804" cy="337.5" r="5.1" fill="#a9375f"/><circle cx="1091.6" cy="337.5" r="5.1" fill="#a9375f"/><circle cx="832.5" cy="425" r="5.2" fill="#a9375f"/><circle cx="1063.1" cy="425" r="5.2" fill="#a9375f"/><circle cx="864" cy="511" r="5.7" fill="#a9375f"/><circle cx="1031.6" cy="511" r="5.7" fill="#a9375f"/><path d="M941 330.8 H954.6 C958 338 962 345 964 352 C967 370 966 392 962.5 410 L961.1 420 L959.6 450 L957.7 490 L956.6 519 Q956.2 529.6 947.8 529.6 Q939.4 529.6 939 519 L937.9 490 L936 450 L934.5 420 L933.1 410 C929.6 392 928.6 370 931.6 352 C933.6 345 937.6 338 941 330.8 Z" fill="none" stroke="#a9375f" stroke-width="1.3"/></g><defs><clipPath id="abdclip"><rect x="900" y="425" width="100" height="120"/></clipPath></defs><path d="M941 330.8 H954.6 C958 338 962 345 964 352 C967 370 966 392 962.5 410 L961.1 420 L959.6 450 L957.7 490 L956.6 519 Q956.2 529.6 947.8 529.6 Q939.4 529.6 939 519 L937.9 490 L936 450 L934.5 420 L933.1 410 C929.6 392 928.6 370 931.6 352 C933.6 345 937.6 338 941 330.8 Z" fill="none" stroke="#a9375f" stroke-width="1.4" clip-path="url(#abdclip)"/><path d="M 900 266 C 901.8 268.5 907.2 275.3 911 281 C 914.8 286.7 920 294.8 923 300 C 926 305.2 928 310 929 312" fill="none" stroke="#a9375f" stroke-width="15.6" stroke-linecap="round" stroke-linejoin="round"/><path d="M 995.6 266 C 993.8 268.5 988.4 275.3 984.6 281 C 980.8 286.7 975.6 294.8 972.6 300 C 969.6 305.2 967.6 310 966.6 312" fill="none" stroke="#a9375f" stroke-width="15.6" stroke-linecap="round" stroke-linejoin="round"/><path d="M 798 556.5 C 796.5 558.2 792 562.6 789 567 C 786 571.4 782.8 578.5 780 583 C 777.2 587.5 773.3 592.2 772 594" fill="none" stroke="#a9375f" stroke-width="22.1" stroke-linecap="round" stroke-linejoin="round"/><path d="M 1097.6 556.5 C 1099.1 558.2 1103.6 562.6 1106.6 567 C 1109.6 571.4 1112.8 578.5 1115.6 583 C 1118.4 587.5 1122.3 592.2 1123.6 594" fill="none" stroke="#a9375f" stroke-width="22.1" stroke-linecap="round" stroke-linejoin="round"/><path d="M 776.4 204.3 C 775 205.2 770 206.8 767.9 210 C 765.8 213.2 764.3 219.5 764 223.6 C 763.7 227.7 764.2 231.1 766 234.3 C 767.8 237.5 771.7 240.4 775 243 C 778.3 245.6 782 248.2 786 250 C 790 251.8 794.8 252.8 799 254 C 803.2 255.2 807.3 255.8 811 257 C 814.7 258.2 818 258.8 821 261 C 824 263.2 826.8 267.3 829 270 C 831.2 272.7 833.2 275.8 834 277" fill="none" stroke="#e5457a" stroke-width="10.5" stroke-linecap="round" stroke-linejoin="round"/><path d="M 1119.2 204.3 C 1120.6 205.2 1125.6 206.8 1127.7 210 C 1129.8 213.2 1131.3 219.5 1131.6 223.6 C 1131.9 227.7 1131.4 231.1 1129.6 234.3 C 1127.8 237.5 1123.9 240.4 1120.6 243 C 1117.3 245.6 1113.6 248.2 1109.6 250 C 1105.6 251.8 1100.8 252.8 1096.6 254 C 1092.4 255.2 1088.3 255.8 1084.6 257 C 1080.9 258.2 1077.6 258.8 1074.6 261 C 1071.6 263.2 1068.8 267.3 1066.6 270 C 1064.4 272.7 1062.4 275.8 1061.6 277" fill="none" stroke="#e5457a" stroke-width="10.5" stroke-linecap="round" stroke-linejoin="round"/><path d="M 821 261 C 822.3 262.5 826.2 266.5 829 270 C 831.8 273.5 835.2 278.3 838 282 C 840.8 285.7 844.1 288.7 846 292 C 847.9 295.3 848.8 297.7 849.5 302 C 850.2 306.3 850.1 313 850.5 318 C 850.9 323 850.4 327.3 852 332 C 853.6 336.7 856.3 342 860 346 C 863.7 350 868.5 353.2 874 356 C 879.5 358.8 886.2 361.2 893 363 C 899.8 364.8 911.3 366.1 915 366.7" fill="none" stroke="#e5457a" stroke-width="8.5" stroke-linecap="round" stroke-linejoin="round"/><path d="M 1074.6 261 C 1073.3 262.5 1069.4 266.5 1066.6 270 C 1063.8 273.5 1060.4 278.3 1057.6 282 C 1054.8 285.7 1051.5 288.7 1049.6 292 C 1047.7 295.3 1046.8 297.7 1046.1 302 C 1045.3 306.3 1045.5 313 1045.1 318 C 1044.7 323 1045.2 327.3 1043.6 332 C 1042 336.7 1039.3 342 1035.6 346 C 1031.9 350 1027.1 353.2 1021.6 356 C 1016.1 358.8 1009.4 361.2 1002.6 363 C 995.8 364.8 984.3 366.1 980.6 366.7" fill="none" stroke="#e5457a" stroke-width="8.5" stroke-linecap="round" stroke-linejoin="round"/><path d="M 831 236 C 831.8 238.3 834.2 245.7 836 250 C 837.8 254.3 839.4 257 842 262 C 844.6 267 847.3 273.7 851.6 280 C 855.9 286.3 860.4 291.3 867.7 300 C 875 308.7 888.1 323.2 895.5 332 C 902.9 340.8 907.9 348 912 353 C 916.1 358 918.7 360.5 920 362" fill="none" stroke="#e5457a" stroke-width="10" stroke-linecap="round" stroke-linejoin="round"/><path d="M 1064.6 236 C 1063.8 238.3 1061.4 245.7 1059.6 250 C 1057.8 254.3 1056.2 257 1053.6 262 C 1051 267 1048.3 273.7 1044 280 C 1039.7 286.3 1035.2 291.3 1027.9 300 C 1020.6 308.7 1007.5 323.2 1000.1 332 C 992.7 340.8 987.7 348 983.6 353 C 979.5 358 976.9 360.5 975.6 362" fill="none" stroke="#e5457a" stroke-width="10" stroke-linecap="round" stroke-linejoin="round"/><path d="M 818 262 C 818.8 265.9 822.3 278.2 822.9 285.7 C 823.5 293.2 822.1 301.2 821.4 307.1 C 820.7 313.1 818.9 316.6 818.5 321.4 C 818.1 326.2 818.4 331.4 819 335.7 C 819.6 340 820.2 343.4 822 347 C 823.8 350.6 826.2 354 830 357 C 833.8 360 839.7 363.1 845 365 C 850.3 366.9 856.8 367.8 862 368.5 C 867.2 369.2 873.7 369.3 876 369.5" fill="none" stroke="#e5457a" stroke-width="8.5" stroke-linecap="round" stroke-linejoin="round"/><path d="M 1077.6 262 C 1076.8 265.9 1073.3 278.2 1072.7 285.7 C 1072.1 293.2 1073.5 301.2 1074.2 307.1 C 1074.9 313.1 1076.7 316.6 1077.1 321.4 C 1077.5 326.2 1077.2 331.4 1076.6 335.7 C 1076 340 1075.4 343.4 1073.6 347 C 1071.8 350.6 1069.4 354 1065.6 357 C 1061.8 360 1055.9 363.1 1050.6 365 C 1045.3 366.9 1038.8 367.8 1033.6 368.5 C 1028.4 369.2 1021.9 369.3 1019.6 369.5" fill="none" stroke="#e5457a" stroke-width="8.5" stroke-linecap="round" stroke-linejoin="round"/><path d="M 797 259 C 795.2 259.5 789.3 260 786 262 C 782.7 264 779 267.3 777 271 C 775 274.7 774 279.8 774 284 C 774 288.2 774.8 292.9 777 296 C 779.2 299.1 783.2 301.7 787 302.5 C 790.8 303.3 796.3 302.6 800 301 C 803.7 299.4 807.2 295.8 809 293 C 810.8 290.2 811 286.4 810.5 284 C 810 281.6 807.7 279.1 806 278.5 C 804.3 277.9 801.5 279.3 800.5 280.5 C 799.5 281.7 800.1 284.7 800 285.5" fill="none" stroke="#e5457a" stroke-width="8.8" stroke-linecap="round" stroke-linejoin="round"/><path d="M 1098.6 259 C 1100.4 259.5 1106.3 260 1109.6 262 C 1112.9 264 1116.6 267.3 1118.6 271 C 1120.6 274.7 1121.6 279.8 1121.6 284 C 1121.6 288.2 1120.8 292.9 1118.6 296 C 1116.4 299.1 1112.4 301.7 1108.6 302.5 C 1104.8 303.3 1099.3 302.6 1095.6 301 C 1091.9 299.4 1088.3 295.8 1086.6 293 C 1084.8 290.2 1084.6 286.4 1085.1 284 C 1085.6 281.6 1087.9 279.1 1089.6 278.5 C 1091.3 277.9 1094.1 279.3 1095.1 280.5 C 1096.1 281.7 1095.5 284.7 1095.6 285.5" fill="none" stroke="#e5457a" stroke-width="8.8" stroke-linecap="round" stroke-linejoin="round"/><path d="M 778 332 C 779.3 330.8 783.2 326.5 786 325 C 788.8 323.5 792.2 322.9 795 322.8 C 797.8 322.7 800.9 323.3 803 324.5 C 805.1 325.7 806.8 328.1 807.5 330 C 808.2 331.9 808.1 334.6 807.5 336 C 806.9 337.4 804.6 338.1 804 338.5" fill="none" stroke="#e5457a" stroke-width="7.7" stroke-linecap="round" stroke-linejoin="round"/><path d="M 1117.6 332 C 1116.3 330.8 1112.4 326.5 1109.6 325 C 1106.8 323.5 1103.4 322.9 1100.6 322.8 C 1097.8 322.7 1094.7 323.3 1092.6 324.5 C 1090.5 325.7 1088.8 328.1 1088.1 330 C 1087.3 331.9 1087.5 334.6 1088.1 336 C 1088.7 337.4 1091 338.1 1091.6 338.5" fill="none" stroke="#e5457a" stroke-width="7.7" stroke-linecap="round" stroke-linejoin="round"/><path d="M 779 349 C 781.5 349.6 789.3 352.4 793.8 352.5 C 798.2 352.6 802.4 351 805.7 349.5 C 809 348 811.5 345.6 813.5 343.5 C 815.5 341.4 817.2 338.1 818 337" fill="none" stroke="#e5457a" stroke-width="7" stroke-linecap="round" stroke-linejoin="round"/><path d="M 1116.6 349 C 1114.1 349.6 1106.2 352.4 1101.8 352.5 C 1097.3 352.6 1093.2 351 1089.9 349.5 C 1086.6 348 1084.1 345.6 1082.1 343.5 C 1080 341.4 1078.3 338.1 1077.6 337" fill="none" stroke="#e5457a" stroke-width="7" stroke-linecap="round" stroke-linejoin="round"/><path d="M 788 206 C 788 207.5 788 213.5 788 215" fill="none" stroke="#e5457a" stroke-width="7" stroke-linecap="round" stroke-linejoin="round"/><path d="M 1107.6 206 C 1107.6 207.5 1107.6 213.5 1107.6 215" fill="none" stroke="#e5457a" stroke-width="7" stroke-linecap="round" stroke-linejoin="round"/><path d="M 788 491 C 791.3 491.4 801.6 493.1 807.9 493.3 C 814.2 493.5 819.8 492.9 825.7 492.1 C 831.7 491.3 837.7 490.6 843.6 488.6 C 849.5 486.6 856.3 483.3 861.4 480.2 C 866.5 477.1 869.9 473.5 874 470 C 878.1 466.5 882.5 462.5 886 459 C 889.5 455.5 893.5 450.7 895 449" fill="none" stroke="#e5457a" stroke-width="8.8" stroke-linecap="round" stroke-linejoin="round"/><path d="M 1107.6 491 C 1104.3 491.4 1094 493.1 1087.7 493.3 C 1081.4 493.5 1075.8 492.9 1069.9 492.1 C 1063.9 491.3 1058 490.6 1052 488.6 C 1046 486.6 1039.3 483.3 1034.2 480.2 C 1029.1 477.1 1025.7 473.5 1021.6 470 C 1017.5 466.5 1013.1 462.5 1009.6 459 C 1006.1 455.5 1002.1 450.7 1000.6 449" fill="none" stroke="#e5457a" stroke-width="8.8" stroke-linecap="round" stroke-linejoin="round"/><path d="M 819 409 C 817.7 411.8 812.2 420.7 811 426 C 809.8 431.3 810 436.4 812 441 C 814 445.6 818.8 451.1 823 453.5 C 827.2 455.9 832.3 456.9 837 455.5 C 841.7 454.1 848.2 448.8 851 445 C 853.8 441.2 854.1 436.8 853.6 433 C 853.1 429.2 850.7 424.7 848 422.5 C 845.3 420.3 840.2 419.7 837.5 420 C 834.8 420.3 832.9 423.8 832 424.5" fill="none" stroke="#e5457a" stroke-width="8.5" stroke-linecap="round" stroke-linejoin="round"/><path d="M 1076.6 409 C 1077.9 411.8 1083.4 420.7 1084.6 426 C 1085.8 431.3 1085.6 436.4 1083.6 441 C 1081.6 445.6 1076.8 451.1 1072.6 453.5 C 1068.4 455.9 1063.3 456.9 1058.6 455.5 C 1053.9 454.1 1047.4 448.8 1044.6 445 C 1041.8 441.2 1041.5 436.8 1042 433 C 1042.5 429.2 1044.9 424.7 1047.6 422.5 C 1050.3 420.3 1055.4 419.7 1058.1 420 C 1060.8 420.3 1062.7 423.8 1063.6 424.5" fill="none" stroke="#e5457a" stroke-width="8.5" stroke-linecap="round" stroke-linejoin="round"/><path d="M 846 492 C 845.6 492.8 845 493.9 843.6 496.9 C 842.2 499.9 840 505.8 837.6 510 C 835.2 514.2 832.3 518.3 829.3 521.9 C 826.3 525.5 823 528.6 819.8 531.4 C 816.6 534.2 813.2 536.2 810.2 538.6 C 807.2 541 803.3 544.5 801.9 545.7" fill="none" stroke="#e5457a" stroke-width="10.7" stroke-linecap="round" stroke-linejoin="round"/><path d="M 1049.6 492 C 1050 492.8 1050.6 493.9 1052 496.9 C 1053.4 499.9 1055.6 505.8 1058 510 C 1060.4 514.2 1063.3 518.3 1066.3 521.9 C 1069.3 525.5 1072.6 528.6 1075.8 531.4 C 1079 534.2 1082.4 536.2 1085.4 538.6 C 1088.4 541 1092.3 544.5 1093.7 545.7" fill="none" stroke="#e5457a" stroke-width="10.7" stroke-linecap="round" stroke-linejoin="round"/><path d="M 838 518 C 838.5 518.6 839.3 519.7 841.2 521.9 C 843.1 524.1 846.1 529 849.5 531.4 C 852.9 533.8 857 535.8 861.4 536.2 C 865.8 536.6 871.7 535.8 875.7 533.8 C 879.7 531.8 883.2 528.3 885.2 524.3 C 887.2 520.3 888 514.2 887.6 510 C 887.2 505.8 885.2 501.9 883.1 499.3 C 881 496.7 878.2 495.1 875 494.5 C 871.8 493.9 866.8 494.5 863.8 495.7 C 860.8 496.9 858 499.3 857.1 501.7 C 856.2 504.1 857.1 508.3 858.3 510 C 859.4 511.7 863 511.7 864 512" fill="none" stroke="#e5457a" stroke-width="8.3" stroke-linecap="round" stroke-linejoin="round"/><path d="M 1057.6 518 C 1057.1 518.6 1056.3 519.7 1054.4 521.9 C 1052.5 524.1 1049.5 529 1046.1 531.4 C 1042.7 533.8 1038.6 535.8 1034.2 536.2 C 1029.8 536.6 1023.9 535.8 1019.9 533.8 C 1015.9 531.8 1012.4 528.3 1010.4 524.3 C 1008.4 520.3 1007.6 514.2 1008 510 C 1008.3 505.8 1010.4 501.9 1012.5 499.3 C 1014.6 496.7 1017.4 495.1 1020.6 494.5 C 1023.8 493.9 1028.8 494.5 1031.8 495.7 C 1034.8 496.9 1037.6 499.3 1038.5 501.7 C 1039.4 504.1 1038.5 508.3 1037.3 510 C 1036.1 511.7 1032.5 511.7 1031.6 512" fill="none" stroke="#e5457a" stroke-width="8.3" stroke-linecap="round" stroke-linejoin="round"/><path d="M 900 266 C 901.8 268.5 907.2 275.3 911 281 C 914.8 286.7 919.7 294.2 923 300 C 926.3 305.8 928.5 310.7 931 316 C 933.5 321.3 936.2 327.7 938 332 C 939.8 336.3 941.3 340.3 942 342" fill="none" stroke="#e5457a" stroke-width="13.5" stroke-linecap="round" stroke-linejoin="round"/><path d="M 995.6 266 C 993.8 268.5 988.4 275.3 984.6 281 C 980.8 286.7 975.9 294.2 972.6 300 C 969.3 305.8 967.1 310.7 964.6 316 C 962.1 321.3 959.4 327.7 957.6 332 C 955.8 336.3 954.3 340.3 953.6 342" fill="none" stroke="#e5457a" stroke-width="13.5" stroke-linecap="round" stroke-linejoin="round"/><path d="M 812 538 C 810.2 540.5 804.8 548.2 801 553 C 797.2 557.8 792.5 562 789 567 C 785.5 572 782.8 578.5 780 583 C 777.2 587.5 773.3 592.2 772 594" fill="none" stroke="#e5457a" stroke-width="20" stroke-linecap="round" stroke-linejoin="round"/><path d="M 1083.6 538 C 1085.4 540.5 1090.8 548.2 1094.6 553 C 1098.4 557.8 1103.1 562 1106.6 567 C 1110.1 572 1112.8 578.5 1115.6 583 C 1118.4 587.5 1122.3 592.2 1123.6 594" fill="none" stroke="#e5457a" stroke-width="20" stroke-linecap="round" stroke-linejoin="round"/><circle cx="787.9" cy="217.5" r="5.8" fill="#e5457a"/><circle cx="1107.7" cy="217.5" r="5.8" fill="#e5457a"/><circle cx="800.5" cy="285" r="4.8" fill="#e5457a"/><circle cx="1095.1" cy="285" r="4.8" fill="#e5457a"/><circle cx="804" cy="337.5" r="4.4" fill="#e5457a"/><circle cx="1091.6" cy="337.5" r="4.4" fill="#e5457a"/><circle cx="832.5" cy="425" r="4.6" fill="#e5457a"/><circle cx="1063.1" cy="425" r="4.6" fill="#e5457a"/><circle cx="864" cy="511" r="5" fill="#e5457a"/><circle cx="1031.6" cy="511" r="5" fill="#e5457a"/><path d="M941 330.8 H954.6 C958 338 962 345 964 352 C967 370 966 392 962.5 410 L961.1 420 L959.6 450 L957.7 490 L956.6 519 Q956.2 529.6 947.8 529.6 Q939.4 529.6 939 519 L937.9 490 L936 450 L934.5 420 L933.1 410 C929.6 392 928.6 370 931.6 352 C933.6 345 937.6 338 941 330.8 Z" fill="#e5457a"/><path d="M527.4 383.1 L545.2 401 L539.8 402 L541.8 407.8 L536.3 410 L533.6 403.6 L527.1 408.3 Z" fill="#fff"/><path d="M528.6 385.8 L542.5 399.8 L537.6 400.6 L540.2 406.9 L537.3 408.1 L534.6 401.6 L528.6 405.6 Z" fill="#000"/></svg>
<div class="abs" style="left:53px;top:120px;width:1212px;height:1px;background:#d4d4d4"></div>
<svg class="abs" style="left:0;top:0" width="1265" height="121"><path d="M125 89V115" stroke="#e2e2e2" stroke-width="1.2"/><path d="M233.3 89V115" stroke="#e2e2e2" stroke-width="1.2"/><path d="M324.3 89V115" stroke="#e2e2e2" stroke-width="1.2"/><path d="M442.5 89V115" stroke="#e2e2e2" stroke-width="1.2"/><path d="M488.7 89V115" stroke="#e2e2e2" stroke-width="1.2"/><path d="M564 89V115" stroke="#e2e2e2" stroke-width="1.2"/><path d="M612.5 89V115" stroke="#e2e2e2" stroke-width="1.2"/><path d="M758 89V115" stroke="#e2e2e2" stroke-width="1.2"/><path d="M845.6 89V115" stroke="#e2e2e2" stroke-width="1.2"/><path d="M70 101.8 H77.5 Q82 101.8 82 105.3 Q82 108.8 77.5 108.8 H72" stroke="#333" stroke-width="1.3" fill="none"/><path d="M72.5 98.8 L69.3 101.8 L72.5 104.8" stroke="#333" stroke-width="1.3" fill="none"/><path d="M109 101.8 H101.5 Q97 101.8 97 105.3 Q97 108.8 101.5 108.8 H107" stroke="#cfcfcf" stroke-width="1.3" fill="none"/><path d="M106.5 98.8 L109.7 101.8 L106.5 104.8" stroke="#cfcfcf" stroke-width="1.3" fill="none"/><rect x="137.5" y="100.5" width="65.5" height="14" rx="2" fill="#fff" stroke="#dcdcdc"/><path d="M195.8 106.2 h4.4 l-2.2 2.6 z" fill="#222"/><rect x="208" y="100.3" width="14" height="14.2" rx="1" fill="#f5b4d3"/><rect x="256.5" y="101.8" width="12" height="12" rx="3" stroke="#333" stroke-width="1.2" stroke-dasharray="2 1.6" fill="none"/><circle cx="260.5" cy="105.5" r="1.1" fill="#444"/><circle cx="264.7" cy="105.5" r="1.1" fill="#444"/><circle cx="260.5" cy="109.8" r="1.1" fill="#444"/><path d="M264 108.5 l4 1.2 l-1.7 0.7 l-0.8 1.8 z" fill="#222"/><path d="M293.3 113.5 L294.3 109.6 L302.6 101.5 Q303.5 100.8 304.4 101.6 Q305.3 102.5 304.5 103.4 L296.3 111.6 Z M294.3 109.6 L296.3 111.6" stroke="#333" stroke-width="1.2" fill="none" stroke-linejoin="round"/><path d="M308.3 106.2 h4.4 l-2.2 2.6 z" fill="#222"/><path d="M339 102 V114" stroke="#d8d8d8" stroke-width="1"/><rect x="341" y="105" width="8" height="6" stroke="#d8d8d8" fill="none"/><path d="M353 106.3 h4 l-2 2.4 z" fill="#d8d8d8"/><rect x="371" y="102" width="7" height="7" stroke="#333" stroke-width="1.2" fill="#fff"/><rect x="374.5" y="105.5" width="7" height="7" stroke="#333" stroke-width="1.2" fill="#fff"/><path d="M386.3 106.2 h4.4 l-2.2 2.6 z" fill="#222"/><path d="M417 102 L412.2 114 H417 Z M419.5 102 L424.3 114 H419.5 Z" stroke="#333" stroke-width="1.2" fill="none" stroke-linejoin="round"/><path d="M426.8 106.2 h4.4 l-2.2 2.6 z" fill="#222"/><path d="M462 102 L467.5 106 L465.5 112 H458.5 L456.5 106 Z" stroke="#333" stroke-width="1.2" fill="none"/><path d="M462 99.8 L469.8 105.5 L467 114.3 H457 L454.2 105.5 Z" stroke="#333" stroke-width="1" stroke-dasharray="1.5 1.5" fill="none"/><path d="M472.3 106.2 h4.4 l-2.2 2.6 z" fill="#222"/><path d="M529.5 106.5 A7.3 7.3 0 1 0 522.5 116.3" stroke="#333" stroke-width="1.3" fill="none"/><path d="M522.5 116.3 Q523.5 108 529.5 106.5" stroke="#333" stroke-width="1.3" fill="none"/><path d="M534.8 108.2 h4.4 l-2.2 2.6 z" fill="#222"/><path d="M578.5 104 Q585.5 106.5 592.5 104 V113 Q585.5 110.5 578.5 113 Z M582.5 105.3 V111.7 M588.5 105.3 V111.7" stroke="#333" stroke-width="1.2" fill="none"/><path d="M596.3 107.2 h4.4 l-2.2 2.6 z" fill="#222"/><rect x="636.5" y="99.8" width="42.5" height="14.5" rx="2" fill="#fff" stroke="#e3e3e3"/><rect x="669" y="100.3" width="9.5" height="13.5" fill="#fff" stroke="#e6e6e6"/><path d="M671.8 106 l2.2 -3 l2.2 3 z M671.8 108 l2.2 3 l2.2 -3 z" fill="#333"/><rect x="703.5" y="99.8" width="42.5" height="14.5" rx="2" fill="#fff" stroke="#e3e3e3"/><rect x="736" y="100.3" width="9.5" height="13.5" fill="#fff" stroke="#e6e6e6"/><path d="M738.8 106 l2.2 -3 l2.2 3 z M738.8 108 l2.2 3 l2.2 -3 z" fill="#333"/><rect x="689.5" y="93.5" width="8" height="6" rx="1" stroke="#333" stroke-width="1.2" fill="none"/><path d="M691.3 93.5 V91.8 Q691.3 89.6 693.5 89.6 Q695.7 89.6 695.7 91.8 V93.5" stroke="#333" stroke-width="1.2" fill="none"/><circle cx="693.5" cy="96.5" r="0.8" fill="#333"/><path d="M682 99 V95.5 H688 M699 95.5 H705 V99" stroke="#e0e0e0" stroke-width="1" fill="none"/><path d="M783.5 104.5 A5.6 5.6 0 0 0 773 105.5 M772.5 110 A5.6 5.6 0 0 0 783 109" stroke="#333" stroke-width="1.3" fill="none"/><path d="M784.5 101.5 V105.5 H780.5 M771.5 113 V109 H775.5" stroke="#333" stroke-width="1.3" fill="none"/><rect x="790.5" y="99.8" width="43.5" height="15" rx="2" fill="#fff" stroke="#e3e3e3"/><rect x="824" y="100.3" width="9.5" height="14" fill="#fff" stroke="#e6e6e6"/><path d="M826.8 106.5 l2.2 -3 l2.2 3 z M826.8 108.5 l2.2 3 l2.2 -3 z" fill="#333"/><rect x="867.5" y="99.8" width="43.5" height="15" rx="2" fill="#fff" stroke="#e3e3e3"/><rect x="901" y="100.3" width="9.5" height="14" fill="#fff" stroke="#e6e6e6"/><path d="M903.8 106.5 l2.2 -3 l2.2 3 z M903.8 108.5 l2.2 3 l2.2 -3 z" fill="#333"/><rect x="928.5" y="99.8" width="43.5" height="15" rx="2" fill="#fff" stroke="#e3e3e3"/><rect x="962" y="100.3" width="9.5" height="14" fill="#fff" stroke="#e6e6e6"/><path d="M964.8 106.5 l2.2 -3 l2.2 3 z M964.8 108.5 l2.2 3 l2.2 -3 z" fill="#333"/></svg>
<div class="t" style="left:137.6px;top:89.66px;font-size:8.2px;color:#666;font-weight:normal;">Operation</div>
<div class="t" style="left:245.3px;top:89.66px;font-size:8.2px;color:#666;font-weight:normal;">Select All</div>
<div class="t" style="left:295px;top:89.66px;font-size:8.2px;color:#666;font-weight:normal;">Edit</div>
<div class="t" style="left:338px;top:89.66px;font-size:8.2px;color:#cfcfcf;font-weight:normal;">Align</div>
<div class="t" style="left:369px;top:89.66px;font-size:8.2px;color:#666;font-weight:normal;">Arrange</div>
<div class="t" style="left:414px;top:89.66px;font-size:8.2px;color:#666;font-weight:normal;">Flip</div>
<div class="t" style="left:455px;top:89.66px;font-size:8.2px;color:#666;font-weight:normal;">Offset</div>
<div class="t" style="left:500.8px;top:89.66px;font-size:8.2px;color:#666;font-weight:normal;">Create Sticker</div>
<div class="t" style="left:579px;top:89.66px;font-size:8.2px;color:#666;font-weight:normal;">Warp</div>
<div class="t" style="left:624.7px;top:89.66px;font-size:8.2px;color:#666;font-weight:normal;">Size</div>
<div class="t" style="left:770px;top:89.66px;font-size:8.2px;color:#666;font-weight:normal;">Rotate</div>
<div class="t" style="left:858px;top:89.66px;font-size:8.2px;color:#666;font-weight:normal;">Position</div>
<div class="t" style="left:142px;top:104.87px;font-size:7.6px;color:#555;font-weight:normal;">Basic Cut</div>
<div class="t" style="left:624.7px;top:104.86px;font-size:8.2px;color:#777;font-weight:normal;">W</div>
<div class="t" style="left:641px;top:104.69px;font-size:8.4px;color:#666;font-weight:normal;">8.283</div>
<div class="t" style="left:692px;top:104.86px;font-size:8.2px;color:#777;font-weight:normal;">H</div>
<div class="t" style="left:707px;top:104.69px;font-size:8.4px;color:#666;font-weight:normal;">8</div>
<div class="t" style="left:795px;top:104.89px;font-size:8.4px;color:#666;font-weight:normal;">0</div>
<div class="t" style="left:858px;top:105.06px;font-size:8.2px;color:#777;font-weight:normal;">X</div>
<div class="t" style="left:871px;top:104.89px;font-size:8.4px;color:#666;font-weight:normal;">1.318</div>
<div class="t" style="left:919px;top:105.06px;font-size:8.2px;color:#777;font-weight:normal;">Y</div>
<div class="t" style="left:932px;top:104.89px;font-size:8.4px;color:#666;font-weight:normal;">1.492</div>
<div class="abs" style="left:0;top:83px;width:53.5px;height:757px;background:#cccccc"></div>
<div class="abs" style="left:51.5px;top:83px;width:2px;height:757px;background:#c5c5c5"></div>
<svg class="abs" style="left:0;top:0" width="54" height="640"><circle cx="26.2" cy="100" r="8" stroke="#3a3a3a" stroke-width="1.3" fill="none" stroke-linejoin="round" stroke-linecap="round"/><path d="M26.2 95.5V104.5M21.7 100H30.7" stroke="#3a3a3a" stroke-width="1.3" fill="none" stroke-linejoin="round" stroke-linecap="round"/><path d="M22.5 147.5 L18.5 150.5 L20.5 154 L22.3 153 V162 H30.2 V153 L32 154 L34 150.5 L30 147.5 Q26.2 150.5 22.5 147.5 Z" stroke="#3a3a3a" stroke-width="1.3" fill="none" stroke-linejoin="round" stroke-linecap="round"/><path d="M24.2 155.5h0.1M28.3 155.5h0.1" stroke="#3a3a3a" stroke-width="1.3" fill="none" stroke-linejoin="round" stroke-linecap="round"/><rect x="20.5" y="203" width="11" height="14.5" rx="1.5" stroke="#3a3a3a" stroke-width="1.3" fill="none" stroke-linejoin="round" stroke-linecap="round"/><path d="M23 203 V201.5 H29.5" stroke="#3a3a3a" stroke-width="1.3" fill="none" stroke-linejoin="round" stroke-linecap="round"/><path d="M26 213 L23.6 210.6 Q22.8 209.2 24.2 208.3 Q25.3 207.8 26 208.8 Q26.7 207.8 27.8 208.3 Q29.2 209.2 28.4 210.6 Z" stroke="#3a3a3a" stroke-width="1.3" fill="none" stroke-linejoin="round" stroke-linecap="round"/><path d="M25.2 257 L18.8 268 H28.5" stroke="#3a3a3a" stroke-width="1.3" fill="none" stroke-linejoin="round" stroke-linecap="round"/><path d="M25.2 257 L30 265.5" stroke="#3a3a3a" stroke-width="1.3" fill="none" stroke-linejoin="round" stroke-linecap="round"/><circle cx="29" cy="269.5" r="4.2" stroke="#3a3a3a" stroke-width="1.3" fill="none" stroke-linejoin="round" stroke-linecap="round"/><path d="M26 312 Q32 312 32 318.5 Q32 322.5 27.8 325.5 H24.2 Q20 322.5 20 318.5 Q20 312 26 312 Z" stroke="#3a3a3a" stroke-width="1.3" fill="none" stroke-linejoin="round" stroke-linecap="round"/><path d="M26 312 Q23 317.5 24.2 325.5 M26 312 Q29 317.5 27.8 325.5" stroke="#3a3a3a" stroke-width="1.3" fill="none" stroke-linejoin="round" stroke-linecap="round"/><rect x="24" y="327" width="4" height="2.6" stroke="#3a3a3a" stroke-width="1.3" fill="none" stroke-linejoin="round" stroke-linecap="round"/><path d="M19.5 370 V368 H32.5 V370 M26 368 V381 M23.5 381 H28.5" stroke="#3a3a3a" stroke-width="1.3" fill="none" stroke-linejoin="round" stroke-linecap="round"/><path d="M32.8 436 Q34 434 34 429 Q34 422 26 422 Q18 422 18 429 Q18 436 26 436 H33.5 Z" stroke="#3a3a3a" stroke-width="1.3" fill="none" stroke-linejoin="round" stroke-linecap="round"/><path d="M22 427.5H30M22 431H28" stroke="#3a3a3a" stroke-width="1.3" fill="none" stroke-linejoin="round" stroke-linecap="round"/><path d="M23.5 476 H30.5 M32 477.5 V484 M30.5 485.5 H22 M20.5 484 V479" stroke="#3a3a3a" stroke-width="1.3" fill="none" stroke-linejoin="round" stroke-linecap="round"/><circle cx="32" cy="476" r="1.6" stroke="#3a3a3a" stroke-width="1.3" fill="none" stroke-linejoin="round" stroke-linecap="round"/><circle cx="32" cy="485.5" r="1.6" stroke="#3a3a3a" stroke-width="1.3" fill="none" stroke-linejoin="round" stroke-linecap="round"/><circle cx="20.5" cy="485.5" r="1.6" stroke="#3a3a3a" stroke-width="1.3" fill="none" stroke-linejoin="round" stroke-linecap="round"/><path d="M22.5 471 L23.3 474.2 L26 475 L23.3 475.8 L22.5 479 L21.7 475.8 L19 475 L21.7 474.2 Z" fill="#3a3a3a"/><path d="M20.6 532.5 H32.4 M26.5 543.5 V536 M23 539 L26.5 535.5 L30 539" stroke="#3a3a3a" stroke-width="1.3" fill="none" stroke-linejoin="round" stroke-linecap="round"/><path d="M18.5 589.2 H34" stroke="#3a3a3a" stroke-width="1.2"/><path d="M19.5 603.5 V592.5 L22.5 598 L25.5 592.5 V603.5 M33.5 592.5 H28.8 V603.5 H33.5 V598.5 H31" stroke="#3a3a3a" stroke-width="1.5" fill="none"/></svg>
<div class="t" style="left:26.2px;width:0;top:115.87px;font-size:8.3px;color:#666;font-weight:normal;display:flex;justify-content:center;"><span>New</span></div>
<div class="t" style="left:26.3px;width:0;top:171.17px;font-size:8.3px;color:#666;font-weight:normal;display:flex;justify-content:center;"><span>Templates</span></div>
<div class="t" style="left:26px;width:0;top:224.87px;font-size:8.3px;color:#666;font-weight:normal;display:flex;justify-content:center;"><span>Projects</span></div>
<div class="t" style="left:26px;width:0;top:279.97px;font-size:8.3px;color:#666;font-weight:normal;display:flex;justify-content:center;"><span>Shapes</span></div>
<div class="t" style="left:26px;width:0;top:334.67px;font-size:8.3px;color:#666;font-weight:normal;display:flex;justify-content:center;"><span>Images</span></div>
<div class="t" style="left:26px;width:0;top:389.37px;font-size:8.3px;color:#666;font-weight:normal;display:flex;justify-content:center;"><span>Text</span></div>
<div class="t" style="left:26px;width:0;top:444.07px;font-size:8.3px;color:#666;font-weight:normal;display:flex;justify-content:center;"><span>Phrases</span></div>
<div class="t" style="left:26px;width:0;top:496.87px;font-size:8.3px;color:#666;font-weight:normal;display:flex;justify-content:center;"><span>Editable</span></div>
<div class="t" style="left:26px;width:0;top:508.27px;font-size:8.3px;color:#666;font-weight:normal;display:flex;justify-content:center;"><span>Images</span></div>
<div class="t" style="left:26px;width:0;top:554.97px;font-size:8.3px;color:#666;font-weight:normal;display:flex;justify-content:center;"><span>Upload</span></div>
<div class="t" style="left:26.2px;width:0;top:608.27px;font-size:8.3px;color:#666;font-weight:normal;display:flex;justify-content:center;"><span>Monogram</span></div>
<div class="abs" style="left:1251px;top:121px;width:14px;height:719px;background:#f0f0f0"></div>
<div class="abs" style="left:1252px;top:135px;width:11.5px;height:33.5px;background:#bdbdbd"></div>
<svg class="abs" style="left:1250px;top:120px" width="16" height="720"><path d="M4.5 11 L7.5 7.5 L10.5 11 Z" fill="#888"/><path d="M4.5 699 L7.5 702.5 L10.5 699 Z" fill="#222"/></svg>
<div class="abs" style="left:1251px;top:830px;width:14px;height:10px;background:#dcdcdc"></div>
<div class="abs" style="left:53.5px;top:831px;width:1197.5px;height:9px;background:#f0f0f0"></div>
<div class="abs" style="left:67.5px;top:831px;width:97.5px;height:9px;background:#bdbdbd"></div>
<svg class="abs" style="left:1150px;top:826px" width="100" height="14"><path d="M93.5 7 L96.5 10 L93.5 13 Z" fill="#222"/></svg>
<svg class="abs" style="left:54px;top:826px" width="14" height="14"><path d="M9 8 L6 11 L9 14 Z" fill="#666"/></svg>
<div class="abs" style="left:1265.5px;top:83px;width:234.5px;height:757px;background:#fff;border-left:1px solid #e3e3e3"></div>
<div class="t" style="left:1280px;top:96.91px;font-size:10.5px;color:#137a55;font-weight:bold;">Layers</div>
<div class="t" style="left:1339px;top:96.15px;font-size:11.4px;color:#555;font-weight:normal;">Color Sync</div>
<div class="abs" style="left:1267.5px;top:117px;width:59px;height:2.5px;background:#137a55"></div>
<div class="abs" style="left:1266px;top:120px;width:234px;height:1px;background:#e8e8e8"></div>
<svg class="abs" style="left:0;top:0" width="1500" height="840"><path d="M1282.5 134.5V132.5H1284.5M1294.5 132.5H1296.5V134.5M1296.5 142.5V144.5H1294.5M1284.5 144.5H1282.5V142.5" stroke="#d6d6d6" stroke-width="1.2" fill="none" stroke-linejoin="round"/><rect x="1285.5" y="135" width="5" height="5" rx="1" stroke="#d6d6d6" stroke-width="1.2" fill="none" stroke-linejoin="round"/><rect x="1288" y="137.5" width="5" height="5" rx="1" stroke="#d6d6d6" stroke-width="1.2" fill="none" stroke-linejoin="round"/><rect x="1313.5" y="131.5" width="10" height="10" rx="1.5" stroke="#3b3b3b" stroke-width="1.2" fill="none" stroke-linejoin="round"/><rect x="1317" y="135" width="10.5" height="10.5" rx="1.5" fill="#fff" stroke="#3b3b3b" stroke-width="1.2"/><path d="M1322.2 137.5V143M1319.5 140.2H1325" stroke="#3b3b3b" stroke-width="1.2" fill="none" stroke-linejoin="round"/><path d="M1344.5 134.5H1359M1348.5 134.5V132.3Q1348.5 131.5 1349.3 131.5H1354.2Q1355 131.5 1355 132.3V134.5M1346 134.5L1347 145H1356.5L1357.5 134.5M1350 137.5V142M1353.5 137.5V142" stroke="#3b3b3b" stroke-width="1.2" fill="none" stroke-linejoin="round"/><rect x="1270.3" y="161.7" width="215.5" height="42.8" rx="3.5" fill="#b4e8d6"/><path d="M1279.5 225.5L1283 229L1286.5 225.5" stroke="#333" stroke-width="1.3" fill="none"/><path d="M1297.5 223.5V221.5H1299.5M1309.5 221.5H1311.5V223.5M1311.5 231.5V233.5H1309.5M1299.5 233.5H1297.5V231.5" stroke="#3b3b3b" stroke-width="1.2" fill="none" stroke-linejoin="round"/><rect x="1300.5" y="224" width="5" height="5" rx="1" stroke="#3b3b3b" stroke-width="1.2" fill="none" stroke-linejoin="round"/><rect x="1303" y="226.5" width="5" height="5" rx="1" stroke="#3b3b3b" stroke-width="1.2" fill="none" stroke-linejoin="round"/><rect x="1266" y="157.5" width="222" height="1" fill="#ececec"/><rect x="1488" y="158" width="12" height="607" fill="#f4f4f4"/><path d="M1491.5 169.5L1494.5 166.5L1497.5 169.5Z" fill="#999"/><path d="M1491.5 757L1494.5 760L1497.5 757Z" fill="#999"/><rect x="1266" y="765" width="234" height="39" fill="#f2f2f2"/><rect x="1275.5" y="771" width="41" height="28" rx="2" fill="#fff" stroke="#9a9a9a" stroke-width="1"/><path d="M1284 816.5 A4.5 4.5 0 1 1 1291 812" stroke="#c8c8c8" stroke-width="1.2" fill="none" stroke-linejoin="round"/><rect x="1286.5" y="814" width="8.5" height="8.5" rx="1" stroke="#c8c8c8" stroke-width="1.2" fill="none" stroke-linejoin="round"/><path d="M1288.3 818.3h3.5v2.2" stroke="#c8c8c8" stroke-width="1.2" fill="none" stroke-linejoin="round"/><rect x="1316.5" y="810" width="8" height="8" rx="1" stroke="#c8c8c8" stroke-width="1.2" fill="none" stroke-linejoin="round"/><circle cx="1325" cy="819" r="4.5" stroke="#c8c8c8" stroke-width="1.2" fill="none" stroke-linejoin="round"/><path d="M1335.5 816.5L1337.8 819L1340 816.5Z" fill="#c8c8c8"/><path d="M1365 817.5H1374Q1376.5 817.5 1376.5 815Q1376.5 812.5 1374 812.5H1363Q1361 812.5 1361 815Q1361 817.5 1363 817.5" stroke="#c8c8c8" stroke-width="1.2" fill="none" stroke-linejoin="round"/><path d="M1364 815H1373" stroke="#c8c8c8" stroke-width="1.2" fill="none" stroke-linejoin="round"/><path d="M1406 809V814.5M1403.8 812.5L1406 814.8L1408.2 812.5M1399.5 813.8L1406 818.3L1412.5 813.8M1399.5 818L1406 822.5L1412.5 818" stroke="#c8c8c8" stroke-width="1.2" fill="none" stroke-linejoin="round"/><circle cx="1446.2" cy="816.2" r="7.5" stroke="#2a2a2a" stroke-width="1.6" fill="none" stroke-dasharray="2.6 2.3"/></svg>
<svg class="abs" style="left:1296px;top:173px" width="19" height="19.2"><g transform="scale(0.03854 0.04044) translate(-145.5 -223.5)"><path d="M 379.5 367 C 368 335 352 304 331 304 C 325 303.5 320 306 317 309.3 C 280 271 225 226.5 181 223.5 C 160 223.5 146 238 146 255 C 148 285 160 310 172 335 C 185 365 188 415 205 432 C 215 442 228 448 239.7 452.3 C 232 465 205 478 205.5 500 C 205.5 505 206 509 207 513 C 199 520 197 530 198 536 C 198 545 200 551 205.5 556.5 C 202 563 203 570 204 576 C 205 585 209 591 216 596.7 L 187.6 623.5 C 180 631 177 637 177.2 646 C 177.5 660 185 670 195 673.5 L 379.5 673.5 L 564 673.5 C 574 670 581.5 660 581.8 646 C 582 637 579 631 571.4 623.5 L 543 596.7 C 550 591 554 585 555 576 C 556 570 557 563 553.5 556.5 C 559 551 561 545 561 536 C 562 530 560 520 552 513 C 553 509 553.5 505 553.5 500 C 554 478 527 465 519.3 452.3 C 531 448 544 442 554 432 C 571 415 574 365 587 335 C 599 310 611 285 613 255 C 613 238 599 223.5 578 223.5 C 534 226.5 479 271 442 309.3 C 439 306 434 303.5 428 304 C 407 304 391 335 379.5 367 Z" fill="#f5b4d3" stroke="#c98aa8" stroke-width="20.8"/></g></svg>
<div class="t" style="left:1320.8px;top:171.14px;font-size:10.7px;color:#1f2f29;font-weight:bold;">Weld Result</div>
<div class="t" style="left:1320.8px;top:186.60px;font-size:11.1px;color:#6c8a7f;font-weight:normal;">Basic Cut</div>
<div class="t" style="left:1320.7px;top:223.67px;font-size:11.5px;color:#555;font-weight:normal;">Group</div>
<div class="t" style="left:1346px;top:260.02px;font-size:11.6px;color:#555;font-weight:normal;">Decorative Butterfly</div>
<div class="t" style="left:1346px;top:275.90px;font-size:11.1px;color:#999;font-weight:normal;">Basic Cut</div>
<div class="t" style="left:1346px;top:303.42px;font-size:11.6px;color:#555;font-weight:normal;">Decorative Butterfly</div>
<div class="t" style="left:1346px;top:319.30px;font-size:11.1px;color:#999;font-weight:normal;">Basic Cut</div>
<div class="t" style="left:1346px;top:348.47px;font-size:10.9px;color:#555;font-weight:normal;">Weld Result</div>
<div class="t" style="left:1346px;top:363.80px;font-size:11.1px;color:#999;font-weight:normal;">Basic Cut</div>
<svg class="abs" style="left:1321px;top:350.5px" width="19" height="18.8"><g transform="scale(0.03854 0.03956) translate(-145.5 -223.5)"><path d="M 379.5 367 C 368 335 352 304 331 304 C 325 303.5 320 306 317 309.3 C 280 271 225 226.5 181 223.5 C 160 223.5 146 238 146 255 C 148 285 160 310 172 335 C 185 365 188 415 205 432 C 215 442 228 448 239.7 452.3 C 232 465 205 478 205.5 500 C 205.5 505 206 509 207 513 C 199 520 197 530 198 536 C 198 545 200 551 205.5 556.5 C 202 563 203 570 204 576 C 205 585 209 591 216 596.7 L 187.6 623.5 C 180 631 177 637 177.2 646 C 177.5 660 185 670 195 673.5 L 379.5 673.5 L 564 673.5 C 574 670 581.5 660 581.8 646 C 582 637 579 631 571.4 623.5 L 543 596.7 C 550 591 554 585 555 576 C 556 570 557 563 553.5 556.5 C 559 551 561 545 561 536 C 562 530 560 520 552 513 C 553 509 553.5 505 553.5 500 C 554 478 527 465 519.3 452.3 C 531 448 544 442 554 432 C 571 415 574 365 587 335 C 599 310 611 285 613 255 C 613 238 599 223.5 578 223.5 C 534 226.5 479 271 442 309.3 C 439 306 434 303.5 428 304 C 407 304 391 335 379.5 367 Z" fill="#f5b4d3" stroke="#c98aa8" stroke-width="20.8"/></g></svg>
<div class="t" style="left:1324.7px;top:782.70px;font-size:7.8px;color:#555;font-weight:normal;">Blank Canvas</div>
<div class="t" style="left:1288.7px;width:0;top:830.27px;font-size:8.3px;color:#c8c8c8;font-weight:normal;display:flex;justify-content:center;"><span>Slice</span></div>
<div class="t" style="left:1327.2px;width:0;top:830.27px;font-size:8.3px;color:#c8c8c8;font-weight:normal;display:flex;justify-content:center;"><span>Combine</span></div>
<div class="t" style="left:1368.3px;width:0;top:830.27px;font-size:8.3px;color:#c8c8c8;font-weight:normal;display:flex;justify-content:center;"><span>Attach</span></div>
<div class="t" style="left:1406px;width:0;top:830.27px;font-size:8.3px;color:#c8c8c8;font-weight:normal;display:flex;justify-content:center;"><span>Flatten</span></div>
<div class="t" style="left:1445.8px;width:0;top:830.27px;font-size:8.3px;color:#333;font-weight:normal;display:flex;justify-content:center;"><span>Contour</span></div>
<svg class="abs" style="left:1321.5px;top:262.5px" width="19.5" height="19.5"><g transform="scale(0.03910 0.04167) translate(-724 -178)"><path d="M 941 345 C 938.7 336.7 936 348.8 934 350 C 932 351.2 930.8 355 929 352 C 927.2 349 925.2 338 923 332 C 920.8 326 918.8 321.3 916 316 C 913.2 310.7 910.7 306 906.5 300 C 902.3 294 896.6 286.7 891 280 C 885.4 273.3 878.7 266.7 873 260 C 867.3 253.3 861.7 244.8 857 240 C 852.3 235.2 849 234.1 845 231.1 C 841 228.1 837.1 225.4 832.9 222.1 C 828.7 218.8 824.5 214.8 820 211.4 C 815.5 208 810.7 204.7 805.7 201.5 C 800.7 198.3 794.8 195.1 790 192.5 C 785.2 189.9 782.8 187.9 777.1 185.7 C 771.4 183.5 762.4 180.1 755.7 179.3 C 749 178.5 741.6 179.4 737.1 180.7 C 732.6 182 730.4 184.1 728.6 187.1 C 726.8 190.1 726.2 193.6 726.4 198.6 C 726.6 203.6 728.7 211.1 730 217 C 731.3 222.9 732.5 228.5 734.3 234.3 C 736.1 240.1 738.6 246.1 741 252 C 743.4 257.9 746.5 265.3 748.6 270 C 750.7 274.7 751.2 273.6 753.6 280 C 756 286.4 760.3 299.6 762.9 308.6 C 765.5 317.7 766.9 326.7 769.3 334.3 C 771.7 341.9 774.1 348.6 777.1 354.3 C 780.1 360 783.3 364.7 787.1 368.6 C 790.9 372.5 795.4 375.1 800 377.5 C 804.6 379.9 809.8 381.6 815 383 C 820.2 384.4 824.7 385.2 831.4 385.8 C 838.1 386.4 854.2 385.5 855.2 386.9 C 856.2 388.3 843.4 391.6 837.4 394 C 831.4 396.4 824.1 398.6 819.5 401.2 C 814.9 403.8 812 406.9 810 409.5 C 808 412.1 807.9 416.1 807.6 416.7 C 807.3 417.3 809.8 412.3 808 413 C 806.2 413.7 800.2 418.5 797 421 C 793.8 423.5 790.9 425.3 789 428 C 787.1 430.7 786 433.8 785.5 437 C 785 440.2 785.2 443.6 786 447 C 786.8 450.4 790.2 455 790 457.5 C 789.8 460 786.8 460.4 785 462 C 783.2 463.6 780.8 464.3 779.5 467 C 778.2 469.7 777.4 474.5 777.5 478 C 777.6 481.5 777.8 485.2 780 488 C 782.2 490.8 790.2 492.2 790.5 494.5 C 790.8 496.8 783.7 498.8 782 502 C 780.3 505.2 780.2 510 780.5 514 C 780.8 518 781.8 522.7 783.5 526 C 785.2 529.3 788.2 531.8 791 534 C 793.8 536.2 795.9 536.2 800 539 C 804.1 541.8 811.3 546.7 815.5 550.5 C 819.7 554.3 821.5 559 825 561.9 C 828.5 564.8 831.9 566.6 836.4 567.6 C 840.9 568.6 846.9 568.6 851.7 567.6 C 856.5 566.6 861.5 564.6 865 561.9 C 868.5 559.2 869.2 555.7 872.4 551.4 C 875.6 547.1 880.6 541.9 884 536 C 887.4 530.1 891.1 522.3 893 516 C 894.9 509.7 894.8 504 895.5 498 C 896.2 492 895.9 485.7 897 480 C 898.1 474.3 899.5 469.8 902 464 C 904.5 458.2 908.2 450.7 912 445 C 915.8 439.3 921.2 434.1 924.5 430 C 927.8 425.9 929.8 422.3 931.9 420.5 C 934 418.7 934.3 422.4 937 419 C 939.7 415.6 947.2 412.3 947.9 400 C 948.6 387.7 943.3 353.3 941 345 Z" fill="#3b2630"/><path d="M 954.6 345 C 956.9 336.7 959.6 348.8 961.6 350 C 963.6 351.2 964.8 355 966.6 352 C 968.4 349 970.4 338 972.6 332 C 974.8 326 976.8 321.3 979.6 316 C 982.3 310.7 984.9 306 989.1 300 C 993.3 294 999 286.7 1004.6 280 C 1010.2 273.3 1016.9 266.7 1022.6 260 C 1028.3 253.3 1033.9 244.8 1038.6 240 C 1043.3 235.2 1046.6 234.1 1050.6 231.1 C 1054.6 228.1 1058.5 225.4 1062.7 222.1 C 1066.9 218.8 1071.1 214.8 1075.6 211.4 C 1080.1 208 1084.9 204.7 1089.9 201.5 C 1094.9 198.3 1100.8 195.1 1105.6 192.5 C 1110.4 189.9 1112.8 187.9 1118.5 185.7 C 1124.2 183.5 1133.2 180.1 1139.9 179.3 C 1146.6 178.5 1154 179.4 1158.5 180.7 C 1163 182 1165.2 184.1 1167 187.1 C 1168.8 190.1 1169.4 193.6 1169.2 198.6 C 1169 203.6 1166.9 211.1 1165.6 217 C 1164.3 222.9 1163.1 228.5 1161.3 234.3 C 1159.5 240.1 1157 246.1 1154.6 252 C 1152.2 257.9 1149.1 265.3 1147 270 C 1144.9 274.7 1144.4 273.6 1142 280 C 1139.6 286.4 1135.3 299.6 1132.7 308.6 C 1130.1 317.7 1128.7 326.7 1126.3 334.3 C 1123.9 341.9 1121.5 348.6 1118.5 354.3 C 1115.5 360 1112.3 364.7 1108.5 368.6 C 1104.7 372.5 1100.2 375.1 1095.6 377.5 C 1090.9 379.9 1085.8 381.6 1080.6 383 C 1075.4 384.4 1070.9 385.2 1064.2 385.8 C 1057.5 386.4 1041.4 385.5 1040.4 386.9 C 1039.4 388.3 1052.2 391.6 1058.2 394 C 1064.1 396.4 1071.5 398.6 1076.1 401.2 C 1080.7 403.8 1083.6 406.9 1085.6 409.5 C 1087.6 412.1 1087.7 416.1 1088 416.7 C 1088.3 417.3 1085.8 412.3 1087.6 413 C 1089.4 413.7 1095.4 418.5 1098.6 421 C 1101.8 423.5 1104.7 425.3 1106.6 428 C 1108.5 430.7 1109.6 433.8 1110.1 437 C 1110.6 440.2 1110.3 443.6 1109.6 447 C 1108.8 450.4 1105.4 455 1105.6 457.5 C 1105.8 460 1108.8 460.4 1110.6 462 C 1112.3 463.6 1114.8 464.3 1116.1 467 C 1117.3 469.7 1118.2 474.5 1118.1 478 C 1118 481.5 1117.8 485.2 1115.6 488 C 1113.4 490.8 1105.4 492.2 1105.1 494.5 C 1104.8 496.8 1111.9 498.8 1113.6 502 C 1115.3 505.2 1115.3 510 1115.1 514 C 1114.8 518 1113.8 522.7 1112.1 526 C 1110.3 529.3 1107.3 531.8 1104.6 534 C 1101.8 536.2 1099.7 536.2 1095.6 539 C 1091.5 541.8 1084.3 546.7 1080.1 550.5 C 1075.9 554.3 1074.1 559 1070.6 561.9 C 1067.1 564.8 1063.6 566.6 1059.2 567.6 C 1054.7 568.6 1048.7 568.6 1043.9 567.6 C 1039.1 566.6 1034 564.6 1030.6 561.9 C 1027.1 559.2 1026.4 555.7 1023.2 551.4 C 1020 547.1 1015 541.9 1011.6 536 C 1008.2 530.1 1004.5 522.3 1002.6 516 C 1000.7 509.7 1000.8 504 1000.1 498 C 999.4 492 999.7 485.7 998.6 480 C 997.5 474.3 996.1 469.8 993.6 464 C 991.1 458.2 987.3 450.7 983.6 445 C 979.8 439.3 974.4 434.1 971.1 430 C 967.8 425.9 965.8 422.3 963.7 420.5 C 961.6 418.7 961.3 422.4 958.6 419 C 955.9 415.6 948.4 412.3 947.7 400 C 947 387.7 952.3 353.3 954.6 345 Z" fill="#3b2630"/><path d="M 737 201.4 C 736 193.8 738.6 194.7 740.5 193 C 742.4 191.3 743.7 190.4 748.6 191 C 753.5 191.6 762.4 193.6 770 196.5 C 777.6 199.4 787.9 205.2 794.3 208.5 C 800.7 211.8 804 213.3 808.6 216.5 C 813.2 219.7 818.3 224.5 822 227.5 C 825.7 230.5 827.5 231.9 831 234.5 C 834.5 237.1 838.7 238.8 843 243 C 847.3 247.2 853.3 255.5 857 260 C 860.7 264.5 862.3 266.5 865 270 C 867.7 273.5 868.8 276 873 281 C 877.2 286 885.3 294.6 890 300 C 894.7 305.4 896.8 306.9 901 313.3 C 905.2 319.7 912 331.4 915 338.3 C 918 345.2 918.5 350.4 919 355 C 919.5 359.6 920.3 363.2 918 366 C 915.7 368.8 911.3 370.6 905 372 C 898.7 373.4 888.3 374.2 880 374.5 C 871.7 374.8 861.7 373.6 855 373.5 C 848.3 373.4 845.5 374.4 840 374 C 834.5 373.6 827.8 372.5 822 371 C 816.2 369.5 809.6 367 805 365 C 800.4 363 797.3 362 794.3 359 C 791.3 356 789.5 351.9 787.1 347.1 C 784.7 342.3 782.4 337.9 780 330 C 777.6 322.1 775 307.9 772.9 300 C 770.8 292.1 769.6 287.9 767.5 282.9 C 765.4 277.9 764 277.4 760.5 270 C 757 262.6 750.4 250 746.5 238.6 C 742.6 227.2 738 209 737 201.4 Z" fill="#c98aa5"/><path d="M 1158.6 201.4 C 1159.6 193.8 1157 194.7 1155.1 193 C 1153.2 191.3 1151.9 190.4 1147 191 C 1142.1 191.6 1133.2 193.6 1125.6 196.5 C 1118 199.4 1107.7 205.2 1101.3 208.5 C 1094.9 211.8 1091.6 213.3 1087 216.5 C 1082.4 219.7 1077.3 224.5 1073.6 227.5 C 1069.9 230.5 1068.1 231.9 1064.6 234.5 C 1061.1 237.1 1056.9 238.8 1052.6 243 C 1048.3 247.2 1042.3 255.5 1038.6 260 C 1034.9 264.5 1033.3 266.5 1030.6 270 C 1027.9 273.5 1026.8 276 1022.6 281 C 1018.4 286 1010.3 294.6 1005.6 300 C 1000.9 305.4 998.8 306.9 994.6 313.3 C 990.4 319.7 983.6 331.4 980.6 338.3 C 977.6 345.2 977.1 350.4 976.6 355 C 976.1 359.6 975.3 363.2 977.6 366 C 979.9 368.8 984.3 370.6 990.6 372 C 996.9 373.4 1007.3 374.2 1015.6 374.5 C 1023.9 374.8 1033.9 373.6 1040.6 373.5 C 1047.3 373.4 1050.1 374.4 1055.6 374 C 1061.1 373.6 1067.8 372.5 1073.6 371 C 1079.4 369.5 1086 367 1090.6 365 C 1095.2 363 1098.3 362 1101.3 359 C 1104.3 356 1106.1 351.9 1108.5 347.1 C 1110.9 342.3 1113.2 337.9 1115.6 330 C 1118 322.1 1120.6 307.9 1122.7 300 C 1124.8 292.1 1126 287.9 1128.1 282.9 C 1130.2 277.9 1131.6 277.4 1135.1 270 C 1138.6 262.6 1145.2 250 1149.1 238.6 C 1153 227.2 1157.6 209 1158.6 201.4 Z" fill="#c98aa5"/><path d="M 813.8 420.5 C 819.2 417.3 825.3 414.1 834.3 413.3 C 843.3 412.5 856.9 415.3 867.6 415.7 C 878.3 416.1 889.9 417.3 898.6 415.7 C 907.3 414.1 916.3 405.8 920 406.2 C 923.7 406.6 923.2 414 921 418 C 918.8 422 911.7 425.5 907 430 C 902.3 434.5 895.2 440.3 893 445 C 890.8 449.7 893.5 453.8 893.5 458 C 893.5 462.2 893.6 466 893 470 C 892.4 474 890.8 477 890 482 C 889.2 487 888.8 494.5 888 500 C 887.2 505.5 886.5 509.2 885 515 C 883.5 520.8 881.8 529.5 879 535 C 876.2 540.5 871.2 544.2 868 548 C 864.8 551.8 862.6 556.4 860 558 C 857.4 559.6 854.5 558.7 852.4 557.4 C 850.3 556.1 849.8 551.6 847.6 550.2 C 845.4 548.8 841.5 548.6 839.3 549 C 837.1 549.4 836.3 551.4 834.5 552.6 C 832.7 553.8 830.8 556 828.6 556.2 C 826.4 556.4 823.4 555 821.4 553.8 C 819.4 552.6 818.1 551.3 816.7 549 C 815.3 546.7 814.1 543.6 813 540 C 811.9 536.4 811 530.6 809.8 527.6 C 808.6 524.6 807.6 523.2 806 521.9 C 804.4 520.6 802 521.6 800.2 520 C 798.5 518.4 796.1 515.2 795.5 512.4 C 794.9 509.5 797 506.3 796.4 502.9 C 795.8 499.5 793.5 495.4 792 492 C 790.5 488.6 788.3 485.2 787.6 482.4 C 786.9 479.6 787.2 478.4 787.6 475.2 C 788 472 787.6 466.5 790 463.3 C 792.4 460.1 800.3 459 801.9 456.2 C 803.5 453.4 800.7 449.5 799.5 446.7 C 798.3 443.9 794.4 441.9 794.8 439.5 C 795.2 437.1 798.7 435.6 801.9 432.4 C 805.1 429.2 808.4 423.7 813.8 420.5 Z" fill="#c98aa5"/><path d="M 1081.8 420.5 C 1076.4 417.3 1070.3 414.1 1061.3 413.3 C 1052.3 412.5 1038.7 415.3 1028 415.7 C 1017.3 416.1 1005.7 417.3 997 415.7 C 988.3 414.1 979.3 405.8 975.6 406.2 C 971.9 406.6 972.4 414 974.6 418 C 976.8 422 983.9 425.5 988.6 430 C 993.3 434.5 1000.3 440.3 1002.6 445 C 1004.8 449.7 1002.1 453.8 1002.1 458 C 1002.1 462.2 1002 466 1002.6 470 C 1003.2 474 1004.8 477 1005.6 482 C 1006.4 487 1006.8 494.5 1007.6 500 C 1008.4 505.5 1009.1 509.2 1010.6 515 C 1012.1 520.8 1013.8 529.5 1016.6 535 C 1019.4 540.5 1024.4 544.2 1027.6 548 C 1030.8 551.8 1033 556.4 1035.6 558 C 1038.2 559.6 1041.1 558.7 1043.2 557.4 C 1045.3 556.1 1045.8 551.6 1048 550.2 C 1050.2 548.8 1054.1 548.6 1056.3 549 C 1058.5 549.4 1059.3 551.4 1061.1 552.6 C 1062.9 553.8 1064.8 556 1067 556.2 C 1069.2 556.4 1072.2 555 1074.2 553.8 C 1076.2 552.6 1077.5 551.3 1078.9 549 C 1080.3 546.7 1081.4 543.6 1082.6 540 C 1083.8 536.4 1084.6 530.6 1085.8 527.6 C 1087 524.6 1088 523.2 1089.6 521.9 C 1091.2 520.6 1093.6 521.6 1095.4 520 C 1097.1 518.4 1099.5 515.2 1100.1 512.4 C 1100.7 509.5 1098.6 506.3 1099.2 502.9 C 1099.8 499.5 1102.1 495.4 1103.6 492 C 1105.1 488.6 1107.3 485.2 1108 482.4 C 1108.7 479.6 1108.4 478.4 1108 475.2 C 1107.6 472 1108 466.5 1105.6 463.3 C 1103.2 460.1 1095.3 459 1093.7 456.2 C 1092.1 453.4 1094.9 449.5 1096.1 446.7 C 1097.3 443.9 1101.2 441.9 1100.8 439.5 C 1100.4 437.1 1096.9 435.6 1093.7 432.4 C 1090.5 429.2 1087.2 423.7 1081.8 420.5 Z" fill="#c98aa5"/><path d="M 776.4 204.3 C 775 205.2 770 206.8 767.9 210 C 765.8 213.2 764.3 219.5 764 223.6 C 763.7 227.7 764.2 231.1 766 234.3 C 767.8 237.5 771.7 240.4 775 243 C 778.3 245.6 782 248.2 786 250 C 790 251.8 794.8 252.8 799 254 C 803.2 255.2 807.3 255.8 811 257 C 814.7 258.2 818 258.8 821 261 C 824 263.2 826.8 267.3 829 270 C 831.2 272.7 833.2 275.8 834 277" fill="none" stroke="#3b2630" stroke-width="16.8" stroke-linecap="round"/><path d="M 1119.2 204.3 C 1120.6 205.2 1125.6 206.8 1127.7 210 C 1129.8 213.2 1131.3 219.5 1131.6 223.6 C 1131.9 227.7 1131.4 231.1 1129.6 234.3 C 1127.8 237.5 1123.9 240.4 1120.6 243 C 1117.3 245.6 1113.6 248.2 1109.6 250 C 1105.6 251.8 1100.8 252.8 1096.6 254 C 1092.4 255.2 1088.3 255.8 1084.6 257 C 1080.9 258.2 1077.6 258.8 1074.6 261 C 1071.6 263.2 1068.8 267.3 1066.6 270 C 1064.4 272.7 1062.4 275.8 1061.6 277" fill="none" stroke="#3b2630" stroke-width="16.8" stroke-linecap="round"/><path d="M 821 261 C 822.3 262.5 826.2 266.5 829 270 C 831.8 273.5 835.2 278.3 838 282 C 840.8 285.7 844.1 288.7 846 292 C 847.9 295.3 848.8 297.7 849.5 302 C 850.2 306.3 850.1 313 850.5 318 C 850.9 323 850.4 327.3 852 332 C 853.6 336.7 856.3 342 860 346 C 863.7 350 868.5 353.2 874 356 C 879.5 358.8 886.2 361.2 893 363 C 899.8 364.8 911.3 366.1 915 366.7" fill="none" stroke="#3b2630" stroke-width="13.6" stroke-linecap="round"/><path d="M 1074.6 261 C 1073.3 262.5 1069.4 266.5 1066.6 270 C 1063.8 273.5 1060.4 278.3 1057.6 282 C 1054.8 285.7 1051.5 288.7 1049.6 292 C 1047.7 295.3 1046.8 297.7 1046.1 302 C 1045.3 306.3 1045.5 313 1045.1 318 C 1044.7 323 1045.2 327.3 1043.6 332 C 1042 336.7 1039.3 342 1035.6 346 C 1031.9 350 1027.1 353.2 1021.6 356 C 1016.1 358.8 1009.4 361.2 1002.6 363 C 995.8 364.8 984.3 366.1 980.6 366.7" fill="none" stroke="#3b2630" stroke-width="13.6" stroke-linecap="round"/><path d="M 831 236 C 831.8 238.3 834.2 245.7 836 250 C 837.8 254.3 839.4 257 842 262 C 844.6 267 847.3 273.7 851.6 280 C 855.9 286.3 860.4 291.3 867.7 300 C 875 308.7 888.1 323.2 895.5 332 C 902.9 340.8 907.9 348 912 353 C 916.1 358 918.7 360.5 920 362" fill="none" stroke="#3b2630" stroke-width="16" stroke-linecap="round"/><path d="M 1064.6 236 C 1063.8 238.3 1061.4 245.7 1059.6 250 C 1057.8 254.3 1056.2 257 1053.6 262 C 1051 267 1048.3 273.7 1044 280 C 1039.7 286.3 1035.2 291.3 1027.9 300 C 1020.6 308.7 1007.5 323.2 1000.1 332 C 992.7 340.8 987.7 348 983.6 353 C 979.5 358 976.9 360.5 975.6 362" fill="none" stroke="#3b2630" stroke-width="16" stroke-linecap="round"/><path d="M 818 262 C 818.8 265.9 822.3 278.2 822.9 285.7 C 823.5 293.2 822.1 301.2 821.4 307.1 C 820.7 313.1 818.9 316.6 818.5 321.4 C 818.1 326.2 818.4 331.4 819 335.7 C 819.6 340 820.2 343.4 822 347 C 823.8 350.6 826.2 354 830 357 C 833.8 360 839.7 363.1 845 365 C 850.3 366.9 856.8 367.8 862 368.5 C 867.2 369.2 873.7 369.3 876 369.5" fill="none" stroke="#3b2630" stroke-width="13.6" stroke-linecap="round"/><path d="M 1077.6 262 C 1076.8 265.9 1073.3 278.2 1072.7 285.7 C 1072.1 293.2 1073.5 301.2 1074.2 307.1 C 1074.9 313.1 1076.7 316.6 1077.1 321.4 C 1077.5 326.2 1077.2 331.4 1076.6 335.7 C 1076 340 1075.4 343.4 1073.6 347 C 1071.8 350.6 1069.4 354 1065.6 357 C 1061.8 360 1055.9 363.1 1050.6 365 C 1045.3 366.9 1038.8 367.8 1033.6 368.5 C 1028.4 369.2 1021.9 369.3 1019.6 369.5" fill="none" stroke="#3b2630" stroke-width="13.6" stroke-linecap="round"/><path d="M 797 259 C 795.2 259.5 789.3 260 786 262 C 782.7 264 779 267.3 777 271 C 775 274.7 774 279.8 774 284 C 774 288.2 774.8 292.9 777 296 C 779.2 299.1 783.2 301.7 787 302.5 C 790.8 303.3 796.3 302.6 800 301 C 803.7 299.4 807.2 295.8 809 293 C 810.8 290.2 811 286.4 810.5 284 C 810 281.6 807.7 279.1 806 278.5 C 804.3 277.9 801.5 279.3 800.5 280.5 C 799.5 281.7 800.1 284.7 800 285.5" fill="none" stroke="#3b2630" stroke-width="14.1" stroke-linecap="round"/><path d="M 1098.6 259 C 1100.4 259.5 1106.3 260 1109.6 262 C 1112.9 264 1116.6 267.3 1118.6 271 C 1120.6 274.7 1121.6 279.8 1121.6 284 C 1121.6 288.2 1120.8 292.9 1118.6 296 C 1116.4 299.1 1112.4 301.7 1108.6 302.5 C 1104.8 303.3 1099.3 302.6 1095.6 301 C 1091.9 299.4 1088.3 295.8 1086.6 293 C 1084.8 290.2 1084.6 286.4 1085.1 284 C 1085.6 281.6 1087.9 279.1 1089.6 278.5 C 1091.3 277.9 1094.1 279.3 1095.1 280.5 C 1096.1 281.7 1095.5 284.7 1095.6 285.5" fill="none" stroke="#3b2630" stroke-width="14.1" stroke-linecap="round"/><path d="M 778 332 C 779.3 330.8 783.2 326.5 786 325 C 788.8 323.5 792.2 322.9 795 322.8 C 797.8 322.7 800.9 323.3 803 324.5 C 805.1 325.7 806.8 328.1 807.5 330 C 808.2 331.9 808.1 334.6 807.5 336 C 806.9 337.4 804.6 338.1 804 338.5" fill="none" stroke="#3b2630" stroke-width="12.3" stroke-linecap="round"/><path d="M 1117.6 332 C 1116.3 330.8 1112.4 326.5 1109.6 325 C 1106.8 323.5 1103.4 322.9 1100.6 322.8 C 1097.8 322.7 1094.7 323.3 1092.6 324.5 C 1090.5 325.7 1088.8 328.1 1088.1 330 C 1087.3 331.9 1087.5 334.6 1088.1 336 C 1088.7 337.4 1091 338.1 1091.6 338.5" fill="none" stroke="#3b2630" stroke-width="12.3" stroke-linecap="round"/><path d="M 779 349 C 781.5 349.6 789.3 352.4 793.8 352.5 C 798.2 352.6 802.4 351 805.7 349.5 C 809 348 811.5 345.6 813.5 343.5 C 815.5 341.4 817.2 338.1 818 337" fill="none" stroke="#3b2630" stroke-width="11.2" stroke-linecap="round"/><path d="M 1116.6 349 C 1114.1 349.6 1106.2 352.4 1101.8 352.5 C 1097.3 352.6 1093.2 351 1089.9 349.5 C 1086.6 348 1084.1 345.6 1082.1 343.5 C 1080 341.4 1078.3 338.1 1077.6 337" fill="none" stroke="#3b2630" stroke-width="11.2" stroke-linecap="round"/><path d="M 788 206 C 788 207.5 788 213.5 788 215" fill="none" stroke="#3b2630" stroke-width="11.2" stroke-linecap="round"/><path d="M 1107.6 206 C 1107.6 207.5 1107.6 213.5 1107.6 215" fill="none" stroke="#3b2630" stroke-width="11.2" stroke-linecap="round"/><path d="M 788 491 C 791.3 491.4 801.6 493.1 807.9 493.3 C 814.2 493.5 819.8 492.9 825.7 492.1 C 831.7 491.3 837.7 490.6 843.6 488.6 C 849.5 486.6 856.3 483.3 861.4 480.2 C 866.5 477.1 869.9 473.5 874 470 C 878.1 466.5 882.5 462.5 886 459 C 889.5 455.5 893.5 450.7 895 449" fill="none" stroke="#3b2630" stroke-width="14.1" stroke-linecap="round"/><path d="M 1107.6 491 C 1104.3 491.4 1094 493.1 1087.7 493.3 C 1081.4 493.5 1075.8 492.9 1069.9 492.1 C 1063.9 491.3 1058 490.6 1052 488.6 C 1046 486.6 1039.3 483.3 1034.2 480.2 C 1029.1 477.1 1025.7 473.5 1021.6 470 C 1017.5 466.5 1013.1 462.5 1009.6 459 C 1006.1 455.5 1002.1 450.7 1000.6 449" fill="none" stroke="#3b2630" stroke-width="14.1" stroke-linecap="round"/><path d="M 819 409 C 817.7 411.8 812.2 420.7 811 426 C 809.8 431.3 810 436.4 812 441 C 814 445.6 818.8 451.1 823 453.5 C 827.2 455.9 832.3 456.9 837 455.5 C 841.7 454.1 848.2 448.8 851 445 C 853.8 441.2 854.1 436.8 853.6 433 C 853.1 429.2 850.7 424.7 848 422.5 C 845.3 420.3 840.2 419.7 837.5 420 C 834.8 420.3 832.9 423.8 832 424.5" fill="none" stroke="#3b2630" stroke-width="13.6" stroke-linecap="round"/><path d="M 1076.6 409 C 1077.9 411.8 1083.4 420.7 1084.6 426 C 1085.8 431.3 1085.6 436.4 1083.6 441 C 1081.6 445.6 1076.8 451.1 1072.6 453.5 C 1068.4 455.9 1063.3 456.9 1058.6 455.5 C 1053.9 454.1 1047.4 448.8 1044.6 445 C 1041.8 441.2 1041.5 436.8 1042 433 C 1042.5 429.2 1044.9 424.7 1047.6 422.5 C 1050.3 420.3 1055.4 419.7 1058.1 420 C 1060.8 420.3 1062.7 423.8 1063.6 424.5" fill="none" stroke="#3b2630" stroke-width="13.6" stroke-linecap="round"/><path d="M 846 492 C 845.6 492.8 845 493.9 843.6 496.9 C 842.2 499.9 840 505.8 837.6 510 C 835.2 514.2 832.3 518.3 829.3 521.9 C 826.3 525.5 823 528.6 819.8 531.4 C 816.6 534.2 813.2 536.2 810.2 538.6 C 807.2 541 803.3 544.5 801.9 545.7" fill="none" stroke="#3b2630" stroke-width="17.1" stroke-linecap="round"/><path d="M 1049.6 492 C 1050 492.8 1050.6 493.9 1052 496.9 C 1053.4 499.9 1055.6 505.8 1058 510 C 1060.4 514.2 1063.3 518.3 1066.3 521.9 C 1069.3 525.5 1072.6 528.6 1075.8 531.4 C 1079 534.2 1082.4 536.2 1085.4 538.6 C 1088.4 541 1092.3 544.5 1093.7 545.7" fill="none" stroke="#3b2630" stroke-width="17.1" stroke-linecap="round"/><path d="M 838 518 C 838.5 518.6 839.3 519.7 841.2 521.9 C 843.1 524.1 846.1 529 849.5 531.4 C 852.9 533.8 857 535.8 861.4 536.2 C 865.8 536.6 871.7 535.8 875.7 533.8 C 879.7 531.8 883.2 528.3 885.2 524.3 C 887.2 520.3 888 514.2 887.6 510 C 887.2 505.8 885.2 501.9 883.1 499.3 C 881 496.7 878.2 495.1 875 494.5 C 871.8 493.9 866.8 494.5 863.8 495.7 C 860.8 496.9 858 499.3 857.1 501.7 C 856.2 504.1 857.1 508.3 858.3 510 C 859.4 511.7 863 511.7 864 512" fill="none" stroke="#3b2630" stroke-width="13.3" stroke-linecap="round"/><path d="M 1057.6 518 C 1057.1 518.6 1056.3 519.7 1054.4 521.9 C 1052.5 524.1 1049.5 529 1046.1 531.4 C 1042.7 533.8 1038.6 535.8 1034.2 536.2 C 1029.8 536.6 1023.9 535.8 1019.9 533.8 C 1015.9 531.8 1012.4 528.3 1010.4 524.3 C 1008.4 520.3 1007.6 514.2 1008 510 C 1008.3 505.8 1010.4 501.9 1012.5 499.3 C 1014.6 496.7 1017.4 495.1 1020.6 494.5 C 1023.8 493.9 1028.8 494.5 1031.8 495.7 C 1034.8 496.9 1037.6 499.3 1038.5 501.7 C 1039.4 504.1 1038.5 508.3 1037.3 510 C 1036.1 511.7 1032.5 511.7 1031.6 512" fill="none" stroke="#3b2630" stroke-width="13.3" stroke-linecap="round"/><path d="M 900 266 C 901.8 268.5 907.2 275.3 911 281 C 914.8 286.7 919.7 294.2 923 300 C 926.3 305.8 928.5 310.7 931 316 C 933.5 321.3 936.2 327.7 938 332 C 939.8 336.3 941.3 340.3 942 342" fill="none" stroke="#3b2630" stroke-width="21.6" stroke-linecap="round"/><path d="M 995.6 266 C 993.8 268.5 988.4 275.3 984.6 281 C 980.8 286.7 975.9 294.2 972.6 300 C 969.3 305.8 967.1 310.7 964.6 316 C 962.1 321.3 959.4 327.7 957.6 332 C 955.8 336.3 954.3 340.3 953.6 342" fill="none" stroke="#3b2630" stroke-width="21.6" stroke-linecap="round"/><path d="M 812 538 C 810.2 540.5 804.8 548.2 801 553 C 797.2 557.8 792.5 562 789 567 C 785.5 572 782.8 578.5 780 583 C 777.2 587.5 773.3 592.2 772 594" fill="none" stroke="#3b2630" stroke-width="32" stroke-linecap="round"/><path d="M 1083.6 538 C 1085.4 540.5 1090.8 548.2 1094.6 553 C 1098.4 557.8 1103.1 562 1106.6 567 C 1110.1 572 1112.8 578.5 1115.6 583 C 1118.4 587.5 1122.3 592.2 1123.6 594" fill="none" stroke="#3b2630" stroke-width="32" stroke-linecap="round"/><path d="M941 330.8 H954.6 C958 338 962 345 964 352 C967 370 966 392 962.5 410 L961.1 420 L959.6 450 L957.7 490 L956.6 519 Q956.2 529.6 947.8 529.6 Q939.4 529.6 939 519 L937.9 490 L936 450 L934.5 420 L933.1 410 C929.6 392 928.6 370 931.6 352 C933.6 345 937.6 338 941 330.8 Z" fill="#3b2630"/></g></svg>
<svg class="abs" style="left:1321.5px;top:306.5px" width="19.5" height="19.5"><g transform="scale(0.03910 0.04167) translate(-724 -178)"><path d="M 941 345 C 938.7 336.7 936 348.8 934 350 C 932 351.2 930.8 355 929 352 C 927.2 349 925.2 338 923 332 C 920.8 326 918.8 321.3 916 316 C 913.2 310.7 910.7 306 906.5 300 C 902.3 294 896.6 286.7 891 280 C 885.4 273.3 878.7 266.7 873 260 C 867.3 253.3 861.7 244.8 857 240 C 852.3 235.2 849 234.1 845 231.1 C 841 228.1 837.1 225.4 832.9 222.1 C 828.7 218.8 824.5 214.8 820 211.4 C 815.5 208 810.7 204.7 805.7 201.5 C 800.7 198.3 794.8 195.1 790 192.5 C 785.2 189.9 782.8 187.9 777.1 185.7 C 771.4 183.5 762.4 180.1 755.7 179.3 C 749 178.5 741.6 179.4 737.1 180.7 C 732.6 182 730.4 184.1 728.6 187.1 C 726.8 190.1 726.2 193.6 726.4 198.6 C 726.6 203.6 728.7 211.1 730 217 C 731.3 222.9 732.5 228.5 734.3 234.3 C 736.1 240.1 738.6 246.1 741 252 C 743.4 257.9 746.5 265.3 748.6 270 C 750.7 274.7 751.2 273.6 753.6 280 C 756 286.4 760.3 299.6 762.9 308.6 C 765.5 317.7 766.9 326.7 769.3 334.3 C 771.7 341.9 774.1 348.6 777.1 354.3 C 780.1 360 783.3 364.7 787.1 368.6 C 790.9 372.5 795.4 375.1 800 377.5 C 804.6 379.9 809.8 381.6 815 383 C 820.2 384.4 824.7 385.2 831.4 385.8 C 838.1 386.4 854.2 385.5 855.2 386.9 C 856.2 388.3 843.4 391.6 837.4 394 C 831.4 396.4 824.1 398.6 819.5 401.2 C 814.9 403.8 812 406.9 810 409.5 C 808 412.1 807.9 416.1 807.6 416.7 C 807.3 417.3 809.8 412.3 808 413 C 806.2 413.7 800.2 418.5 797 421 C 793.8 423.5 790.9 425.3 789 428 C 787.1 430.7 786 433.8 785.5 437 C 785 440.2 785.2 443.6 786 447 C 786.8 450.4 790.2 455 790 457.5 C 789.8 460 786.8 460.4 785 462 C 783.2 463.6 780.8 464.3 779.5 467 C 778.2 469.7 777.4 474.5 777.5 478 C 777.6 481.5 777.8 485.2 780 488 C 782.2 490.8 790.2 492.2 790.5 494.5 C 790.8 496.8 783.7 498.8 782 502 C 780.3 505.2 780.2 510 780.5 514 C 780.8 518 781.8 522.7 783.5 526 C 785.2 529.3 788.2 531.8 791 534 C 793.8 536.2 795.9 536.2 800 539 C 804.1 541.8 811.3 546.7 815.5 550.5 C 819.7 554.3 821.5 559 825 561.9 C 828.5 564.8 831.9 566.6 836.4 567.6 C 840.9 568.6 846.9 568.6 851.7 567.6 C 856.5 566.6 861.5 564.6 865 561.9 C 868.5 559.2 869.2 555.7 872.4 551.4 C 875.6 547.1 880.6 541.9 884 536 C 887.4 530.1 891.1 522.3 893 516 C 894.9 509.7 894.8 504 895.5 498 C 896.2 492 895.9 485.7 897 480 C 898.1 474.3 899.5 469.8 902 464 C 904.5 458.2 908.2 450.7 912 445 C 915.8 439.3 921.2 434.1 924.5 430 C 927.8 425.9 929.8 422.3 931.9 420.5 C 934 418.7 934.3 422.4 937 419 C 939.7 415.6 947.2 412.3 947.9 400 C 948.6 387.7 943.3 353.3 941 345 Z" fill="#fff" stroke="#333" stroke-width="22"/><path d="M 954.6 345 C 956.9 336.7 959.6 348.8 961.6 350 C 963.6 351.2 964.8 355 966.6 352 C 968.4 349 970.4 338 972.6 332 C 974.8 326 976.8 321.3 979.6 316 C 982.3 310.7 984.9 306 989.1 300 C 993.3 294 999 286.7 1004.6 280 C 1010.2 273.3 1016.9 266.7 1022.6 260 C 1028.3 253.3 1033.9 244.8 1038.6 240 C 1043.3 235.2 1046.6 234.1 1050.6 231.1 C 1054.6 228.1 1058.5 225.4 1062.7 222.1 C 1066.9 218.8 1071.1 214.8 1075.6 211.4 C 1080.1 208 1084.9 204.7 1089.9 201.5 C 1094.9 198.3 1100.8 195.1 1105.6 192.5 C 1110.4 189.9 1112.8 187.9 1118.5 185.7 C 1124.2 183.5 1133.2 180.1 1139.9 179.3 C 1146.6 178.5 1154 179.4 1158.5 180.7 C 1163 182 1165.2 184.1 1167 187.1 C 1168.8 190.1 1169.4 193.6 1169.2 198.6 C 1169 203.6 1166.9 211.1 1165.6 217 C 1164.3 222.9 1163.1 228.5 1161.3 234.3 C 1159.5 240.1 1157 246.1 1154.6 252 C 1152.2 257.9 1149.1 265.3 1147 270 C 1144.9 274.7 1144.4 273.6 1142 280 C 1139.6 286.4 1135.3 299.6 1132.7 308.6 C 1130.1 317.7 1128.7 326.7 1126.3 334.3 C 1123.9 341.9 1121.5 348.6 1118.5 354.3 C 1115.5 360 1112.3 364.7 1108.5 368.6 C 1104.7 372.5 1100.2 375.1 1095.6 377.5 C 1090.9 379.9 1085.8 381.6 1080.6 383 C 1075.4 384.4 1070.9 385.2 1064.2 385.8 C 1057.5 386.4 1041.4 385.5 1040.4 386.9 C 1039.4 388.3 1052.2 391.6 1058.2 394 C 1064.1 396.4 1071.5 398.6 1076.1 401.2 C 1080.7 403.8 1083.6 406.9 1085.6 409.5 C 1087.6 412.1 1087.7 416.1 1088 416.7 C 1088.3 417.3 1085.8 412.3 1087.6 413 C 1089.4 413.7 1095.4 418.5 1098.6 421 C 1101.8 423.5 1104.7 425.3 1106.6 428 C 1108.5 430.7 1109.6 433.8 1110.1 437 C 1110.6 440.2 1110.3 443.6 1109.6 447 C 1108.8 450.4 1105.4 455 1105.6 457.5 C 1105.8 460 1108.8 460.4 1110.6 462 C 1112.3 463.6 1114.8 464.3 1116.1 467 C 1117.3 469.7 1118.2 474.5 1118.1 478 C 1118 481.5 1117.8 485.2 1115.6 488 C 1113.4 490.8 1105.4 492.2 1105.1 494.5 C 1104.8 496.8 1111.9 498.8 1113.6 502 C 1115.3 505.2 1115.3 510 1115.1 514 C 1114.8 518 1113.8 522.7 1112.1 526 C 1110.3 529.3 1107.3 531.8 1104.6 534 C 1101.8 536.2 1099.7 536.2 1095.6 539 C 1091.5 541.8 1084.3 546.7 1080.1 550.5 C 1075.9 554.3 1074.1 559 1070.6 561.9 C 1067.1 564.8 1063.6 566.6 1059.2 567.6 C 1054.7 568.6 1048.7 568.6 1043.9 567.6 C 1039.1 566.6 1034 564.6 1030.6 561.9 C 1027.1 559.2 1026.4 555.7 1023.2 551.4 C 1020 547.1 1015 541.9 1011.6 536 C 1008.2 530.1 1004.5 522.3 1002.6 516 C 1000.7 509.7 1000.8 504 1000.1 498 C 999.4 492 999.7 485.7 998.6 480 C 997.5 474.3 996.1 469.8 993.6 464 C 991.1 458.2 987.3 450.7 983.6 445 C 979.8 439.3 974.4 434.1 971.1 430 C 967.8 425.9 965.8 422.3 963.7 420.5 C 961.6 418.7 961.3 422.4 958.6 419 C 955.9 415.6 948.4 412.3 947.7 400 C 947 387.7 952.3 353.3 954.6 345 Z" fill="#fff" stroke="#333" stroke-width="22"/><path d="M 776.4 204.3 C 775 205.2 770 206.8 767.9 210 C 765.8 213.2 764.3 219.5 764 223.6 C 763.7 227.7 764.2 231.1 766 234.3 C 767.8 237.5 771.7 240.4 775 243 C 778.3 245.6 782 248.2 786 250 C 790 251.8 794.8 252.8 799 254 C 803.2 255.2 807.3 255.8 811 257 C 814.7 258.2 818 258.8 821 261 C 824 263.2 826.8 267.3 829 270 C 831.2 272.7 833.2 275.8 834 277" fill="none" stroke="#666" stroke-width="14" stroke-linecap="round"/><path d="M 1119.2 204.3 C 1120.6 205.2 1125.6 206.8 1127.7 210 C 1129.8 213.2 1131.3 219.5 1131.6 223.6 C 1131.9 227.7 1131.4 231.1 1129.6 234.3 C 1127.8 237.5 1123.9 240.4 1120.6 243 C 1117.3 245.6 1113.6 248.2 1109.6 250 C 1105.6 251.8 1100.8 252.8 1096.6 254 C 1092.4 255.2 1088.3 255.8 1084.6 257 C 1080.9 258.2 1077.6 258.8 1074.6 261 C 1071.6 263.2 1068.8 267.3 1066.6 270 C 1064.4 272.7 1062.4 275.8 1061.6 277" fill="none" stroke="#666" stroke-width="14" stroke-linecap="round"/><path d="M 821 261 C 822.3 262.5 826.2 266.5 829 270 C 831.8 273.5 835.2 278.3 838 282 C 840.8 285.7 844.1 288.7 846 292 C 847.9 295.3 848.8 297.7 849.5 302 C 850.2 306.3 850.1 313 850.5 318 C 850.9 323 850.4 327.3 852 332 C 853.6 336.7 856.3 342 860 346 C 863.7 350 868.5 353.2 874 356 C 879.5 358.8 886.2 361.2 893 363 C 899.8 364.8 911.3 366.1 915 366.7" fill="none" stroke="#666" stroke-width="14" stroke-linecap="round"/><path d="M 1074.6 261 C 1073.3 262.5 1069.4 266.5 1066.6 270 C 1063.8 273.5 1060.4 278.3 1057.6 282 C 1054.8 285.7 1051.5 288.7 1049.6 292 C 1047.7 295.3 1046.8 297.7 1046.1 302 C 1045.3 306.3 1045.5 313 1045.1 318 C 1044.7 323 1045.2 327.3 1043.6 332 C 1042 336.7 1039.3 342 1035.6 346 C 1031.9 350 1027.1 353.2 1021.6 356 C 1016.1 358.8 1009.4 361.2 1002.6 363 C 995.8 364.8 984.3 366.1 980.6 366.7" fill="none" stroke="#666" stroke-width="14" stroke-linecap="round"/><path d="M 831 236 C 831.8 238.3 834.2 245.7 836 250 C 837.8 254.3 839.4 257 842 262 C 844.6 267 847.3 273.7 851.6 280 C 855.9 286.3 860.4 291.3 867.7 300 C 875 308.7 888.1 323.2 895.5 332 C 902.9 340.8 907.9 348 912 353 C 916.1 358 918.7 360.5 920 362" fill="none" stroke="#666" stroke-width="14" stroke-linecap="round"/><path d="M 1064.6 236 C 1063.8 238.3 1061.4 245.7 1059.6 250 C 1057.8 254.3 1056.2 257 1053.6 262 C 1051 267 1048.3 273.7 1044 280 C 1039.7 286.3 1035.2 291.3 1027.9 300 C 1020.6 308.7 1007.5 323.2 1000.1 332 C 992.7 340.8 987.7 348 983.6 353 C 979.5 358 976.9 360.5 975.6 362" fill="none" stroke="#666" stroke-width="14" stroke-linecap="round"/><path d="M941 330.8 H954.6 C958 338 962 345 964 352 C967 370 966 392 962.5 410 L961.1 420 L959.6 450 L957.7 490 L956.6 519 Q956.2 529.6 947.8 529.6 Q939.4 529.6 939 519 L937.9 490 L936 450 L934.5 420 L933.1 410 C929.6 392 928.6 370 931.6 352 C933.6 345 937.6 338 941 330.8 Z" fill="#fff" stroke="#333" stroke-width="20"/></g></svg>
<div class="abs" style="left:0;top:0;width:1500px;height:32px;background:#f3f3f3"></div>
<div class="abs" style="left:80px;top:1px;width:77px;height:31px;background:#fff;border-radius:6px 6px 0 0"></div>
<svg class="abs" style="left:0;top:0" width="300" height="32"><path d="M14 15.6 L20.6 9.6 L27.2 15.6 V23.6 Q27.2 24 26.8 24 H14.4 Q14 24 14 23.6 Z" fill="#1a7f57"/><path d="M17.6 18.6 Q20.6 21.4 23.6 18.6" stroke="#fff" stroke-width="1.3" fill="none" stroke-linecap="round"/></svg>
<div class="t" style="left:36.5px;top:12.07px;font-size:11.5px;color:#1e1e1e;font-weight:normal;">Home</div>
<div class="t" style="left:99.3px;top:12.49px;font-size:11px;color:#1e1e1e;font-weight:normal;">Canvas</div>
<svg class="abs" style="left:1150px;top:0" width="350" height="32"><circle cx="12.5" cy="14.5" r="1.7" fill="#333"/><circle cx="20" cy="14.5" r="1.7" fill="#333"/><circle cx="27.5" cy="14.5" r="1.7" fill="#333"/><path d="M51.5 20 Q53 18.5 53 15 Q53 10 57.7 9.5 Q62.4 10 62.4 15 Q62.4 18.5 63.9 20 Z" stroke="#333" stroke-width="1.3" fill="none" stroke-linejoin="round"/><path d="M55.8 21.8 Q57.7 23.6 59.6 21.8" stroke="#333" stroke-width="1.3" fill="none"/><path d="M211 10.5 L216 15.5 L221 10.5" stroke="#333" stroke-width="1.4" fill="none"/><path d="M261.5 14.2 H270.5" stroke="#777" stroke-width="1"/><rect x="296.5" y="11.5" width="7" height="7" stroke="#777" stroke-width="1" fill="none" rx="1"/><path d="M298.5 11.5 V10 H305 V16.5 H303.5" stroke="#777" stroke-width="1" fill="none"/><path d="M331.5 11 L339 18.5 M339 11 L331.5 18.5" stroke="#666" stroke-width="1.1"/></svg>
<svg class="abs" style="left:1232px;top:2px" width="26" height="26"><defs><clipPath id="av"><circle cx="13" cy="12.5" r="12.5"/></clipPath></defs><g clip-path="url(#av)"><rect width="26" height="26" fill="#b8b4b4"/><rect x="0" y="0" width="26" height="9" fill="#6a7fa0"/><ellipse cx="13" cy="12" rx="7.5" ry="9" fill="#9a3f2c"/><ellipse cx="13" cy="11.5" rx="4.6" ry="5.8" fill="#e6bfa8"/><path d="M9 10 H17" stroke="#4a2a20" stroke-width="1"/><ellipse cx="13" cy="26" rx="10" ry="6" fill="#c9c3c0"/></g></svg>
<div class="t" style="left:1270.8px;top:11.11px;font-size:11.4px;color:#555;font-weight:normal;">Craft with Sarah</div>
<div class="t" style="left:18px;top:49.31px;font-size:17px;color:#1e1e1e;font-weight:normal;">Untitled Project*</div>
<div class="t" style="left:1181.5px;top:53.57px;font-size:10.9px;color:#666;font-weight:normal;">Save</div>
<svg class="abs" style="left:1220px;top:48px" width="110" height="20"><path d="M4.5 5 H17.5 Q18.5 5 18.5 6 V14 Q18.5 15 17.5 15 H5.5 Q4.5 15 4.5 14 Z" stroke="#444" stroke-width="1.3" fill="none"/><path d="M4.8 6.5 L11.5 11 L18.2 6.5" stroke="#444" stroke-width="1.3" fill="none"/><path d="M84.5 6.5 Q84.5 4.8 86.3 4.8 H96.2 Q98 4.8 98 6.5 V12.5 H84.5 Z" stroke="#444" stroke-width="1.3" fill="none"/><path d="M84.5 9.5 H98" stroke="#444" stroke-width="1.3"/></svg>
<div class="t" style="left:1244.5px;top:53.40px;font-size:11.1px;color:#555;font-weight:normal;">My Stuff</div>
<div class="t" style="left:1323.8px;top:53.40px;font-size:11.1px;color:#555;font-weight:normal;">Maker 3</div>
<div class="abs" style="left:1380px;top:42px;width:104px;height:31px;background:#137d55;border-radius:16px"></div>
<div class="t" style="left:1432px;width:0;top:53.18px;font-size:11.6px;color:#fff;font-weight:bold;display:flex;justify-content:center;"><span>Make</span></div>
<div class="abs" style="left:0;top:82px;width:1500px;height:1px;background:#e2e2e2"></div>
<svg class="abs" style="left:0;top:0" width="300" height="840"><rect x="96" y="797" width="76" height="26" rx="13" fill="#ebebeb" fill-opacity="0.8"/><circle cx="159.2" cy="809.7" r="7.3" fill="none" stroke="#b5b5b5" stroke-width="1.3"/><path d="M159.2 805.7V813.7M155.2 809.7H163.2" stroke="#b5b5b5" stroke-width="1.3"/><text x="104" y="815.3" font-family="Liberation Sans, sans-serif" font-size="15" fill="#b0b0b0">100%</text></svg>
<svg class="abs" style="left:0;top:0" width="200" height="840"><ellipse cx="61" cy="789.5" rx="51" ry="39.5" fill="#c9391e"/><text x="22" y="788" font-family="Liberation Serif, serif" font-style="italic" font-size="27" fill="#fff">Craft</text><text x="80" y="781" font-family="Liberation Serif, serif" font-size="6.5" fill="#fff" letter-spacing="0.3">WITH</text><path d="M81 786 Q90 783 100 787" stroke="#fff" stroke-width="1" fill="none"/><text x="28" y="813" font-family="Liberation Serif, serif" font-style="italic" font-size="25" fill="#fff">Sarah</text></svg>
</body></html>
